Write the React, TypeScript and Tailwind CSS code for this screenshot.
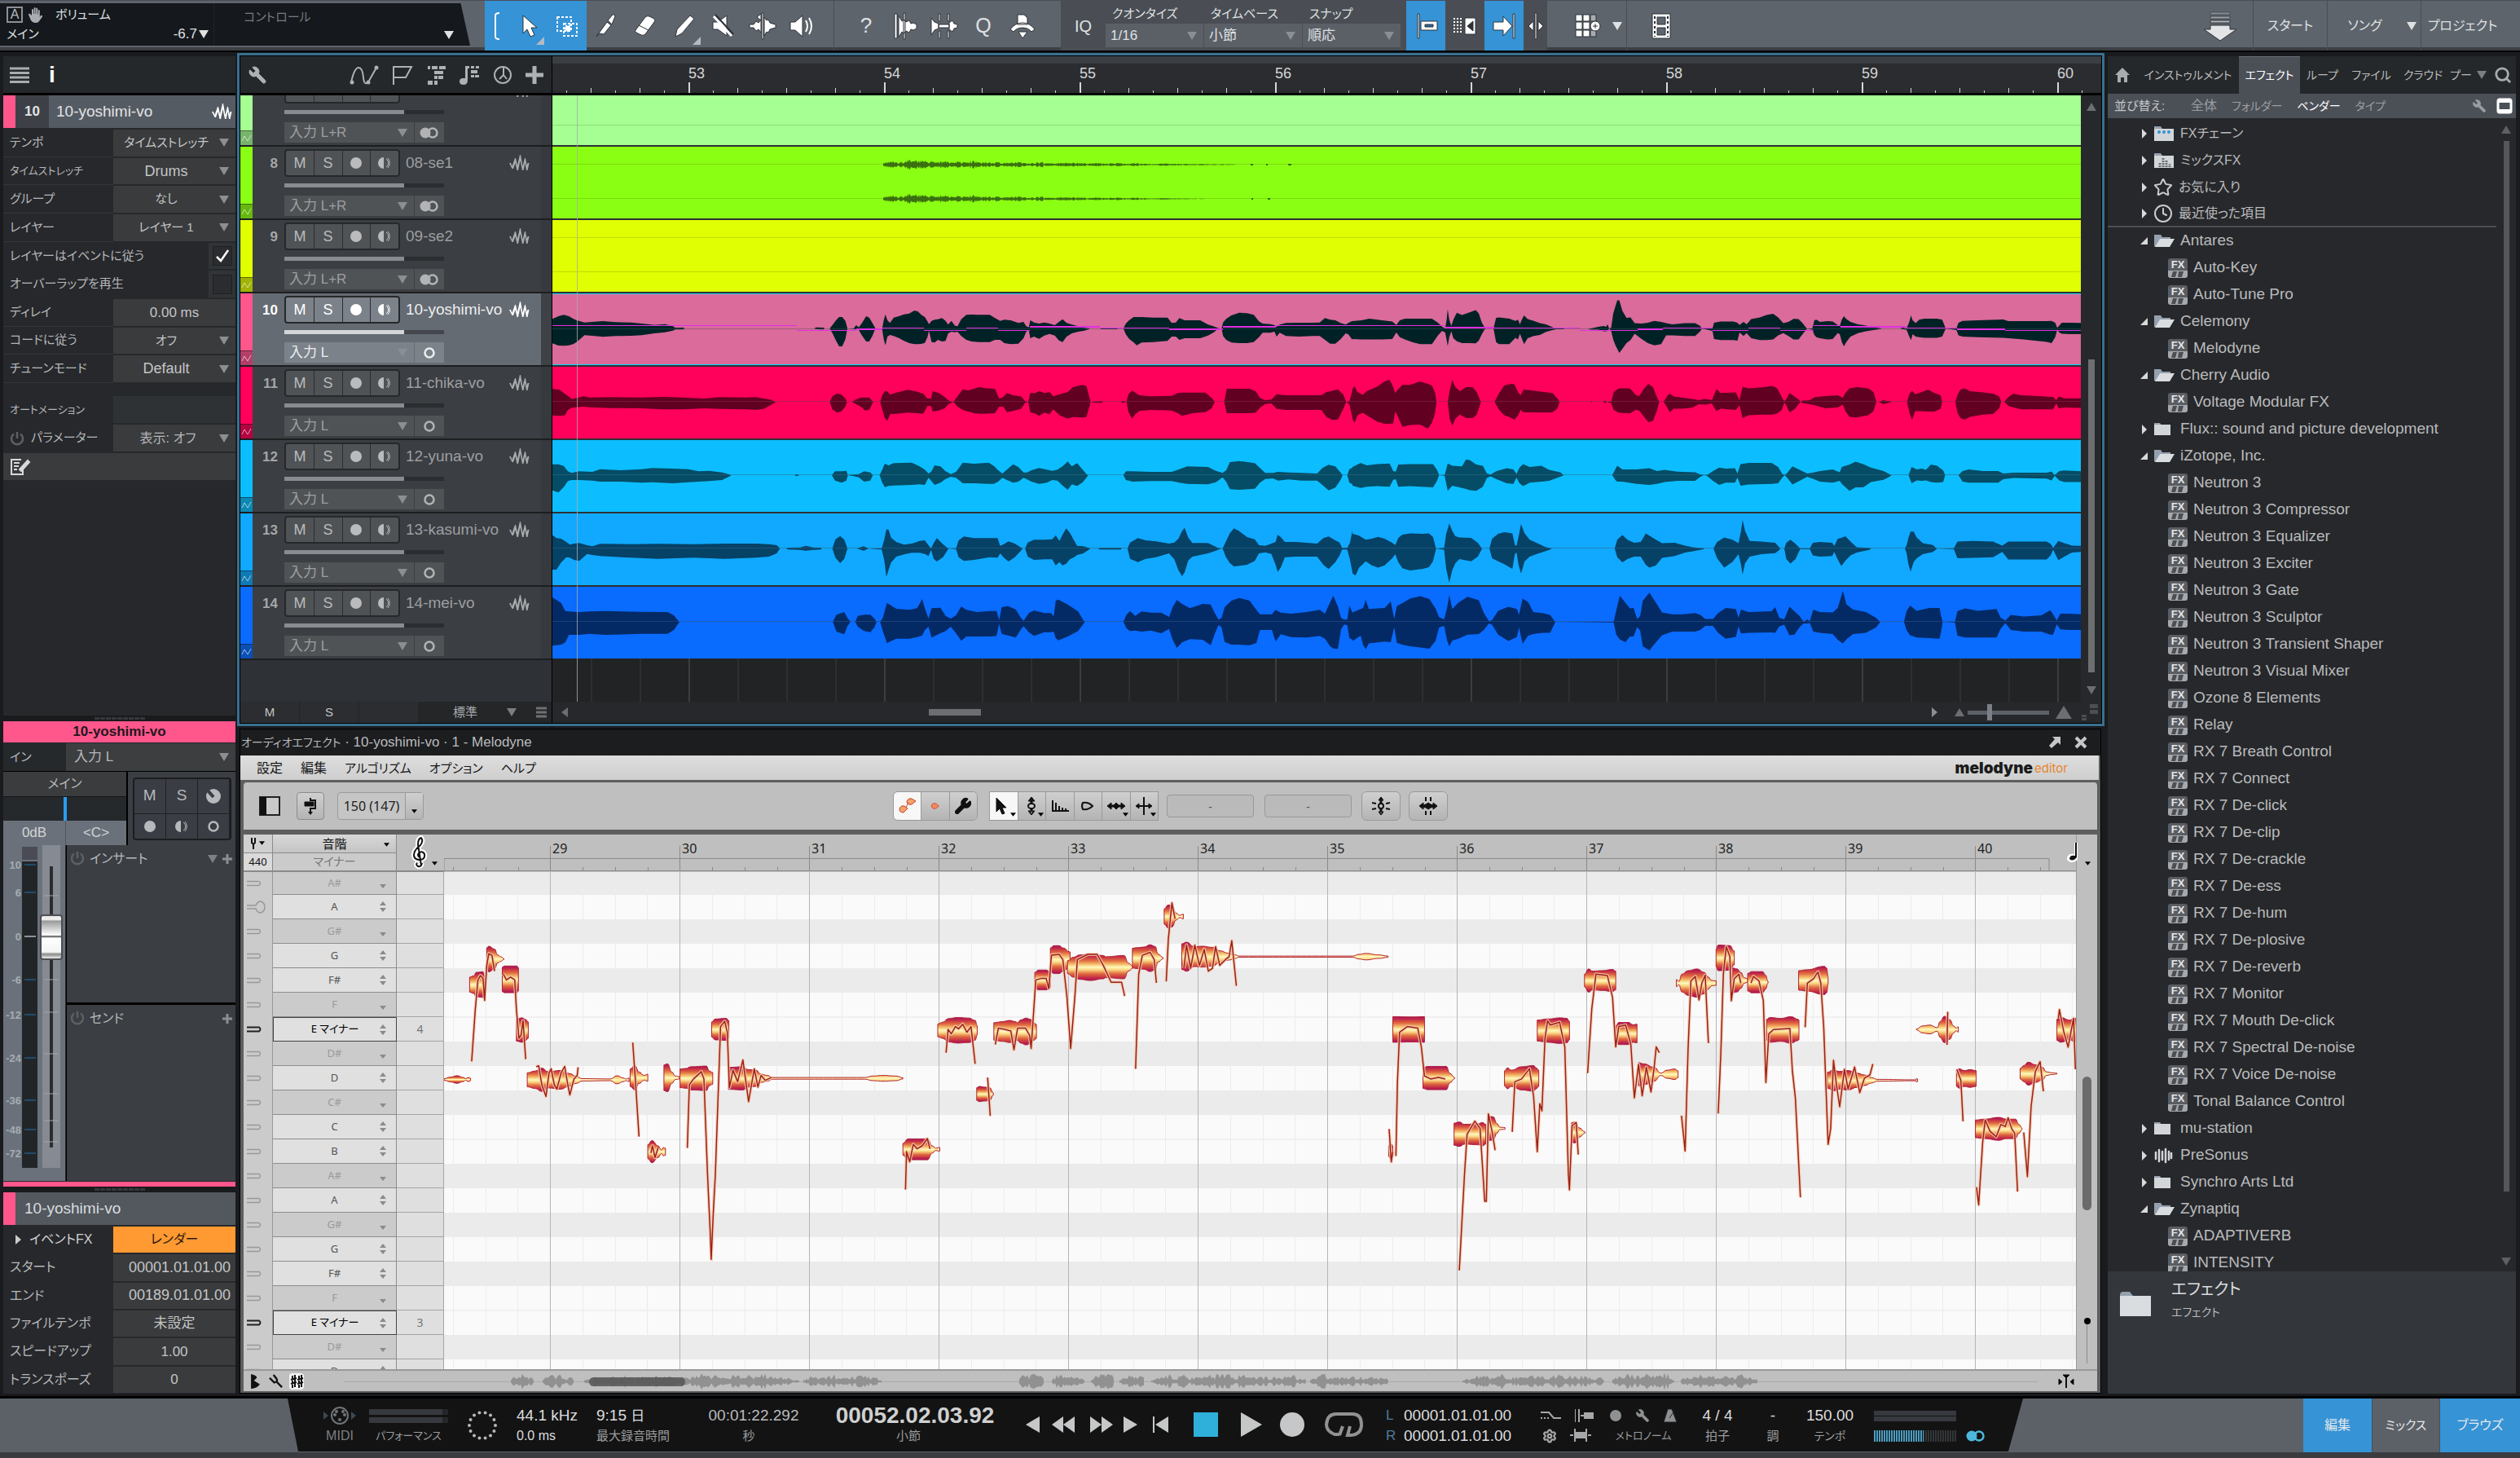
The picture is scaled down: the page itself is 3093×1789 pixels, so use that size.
import React from "react";
import { Search, Wrench, Settings, Star, Clock } from "lucide-react";

/* ------------------------------------------------------------------ */
/* Waveform data: triples of position, upper peak, lower peak           */
/* ------------------------------------------------------------------ */

type Segment = { ox: number; sx: number; sy: number; data: string };

const EARLY = { ox: -18, sx: 1.568, sy: 3 };
const LATE = { ox: 962, sx: 1.6, sy: 2.8 };

const yoshimi: Segment[] = [
  {
    ...EARLY,
    data: "28,35,55 40,45,63 50,50,64 60,45,62 68,36,58 75,30,50 90,22,25 110,25,28 125,27,31 150,23,28 180,22,27 200,18,25 225,13,18 245,16,14 260,8,8 265,2,4 280,3,4 283,0,0 532,0,0 536,4,3 550,3,4 552,0,0 562,0,0 568,14,20 574,30,45 580,42,66 586,42,66 592,28,40 596,0,0 608,0,2 613,12,4 618,4,6 624,20,26 632,45,48 638,40,48 644,20,28 650,0,0 663,0,4 666,30,40 669,52,62 673,30,30 678,20,24 685,40,28 695,45,35 705,52,46 715,55,54 725,66,58 732,62,58 738,50,57 745,42,53 750,26,32 753,16,8 758,28,50 764,32,52 770,34,42 778,38,48 785,28,46 790,14,18 796,28,12 803,10,14 808,8,12 815,34,28 825,50,42 835,51,48 848,50,50 870,50,50 880,38,42 890,28,42 898,32,54 910,30,58 925,20,56 935,24,36 940,8,12 945,4,6 948,30,36 955,22,30 965,18,38 975,22,26 985,18,20 995,12,26 1003,24,44 1010,34,50 1018,20,30 1028,14,18 1040,8,12 1052,2,8 1062,0,2 1063,0,0 1083,0,0 1084,1,3 1115,1,3 1116,0,0 1127,0,0 1132,18,22 1138,30,38 1147,42,52 1153,42,62 1162,42,52 1185,40,50 1212,40,46 1220,20,30 1228,22,30 1235,38,42 1245,30,36 1275,30,36 1290,14,26 1300,8,16 1308,2,4 1312,0,2 1316,0,0 1319,22,28 1325,35,42 1335,48,52 1350,58,54 1365,56,54 1378,50,50 1388,26,32 1395,18,16 1410,16,16 1418,12,12 1422,6,30 1428,14,16 1440,20,28 1465,21,30 1490,21,28 1505,22,28 1515,38,42 1525,32,56 1535,30,56 1545,20,40 1555,14,18 1560,20,22 1568,28,42",
  },
  {
    ...LATE,
    data: "32,25,36 50,28,38 65,34,38 90,28,38 110,24,36 118,12,14 125,28,30 135,34,38 150,34,48 165,34,54 188,34,54 200,20,24 208,6,8 214,0,14 217,30,40 219,66,60 222,30,30 226,8,10 230,30,34 237,54,44 247,46,50 260,54,50 274,63,51 280,52,42 286,20,20 292,2,2 294,0,0 309,0,0 314,36,48 320,38,54 340,34,54 352,26,32 357,30,38 361,14,18 364,28,32 369,45,54 376,32,34 388,26,26 400,18,22 412,14,12 425,4,6 432,0,3 447,0,3 448,0,0 494,0,0 500,0,4 515,6,4 525,8,10 530,6,10 533,14,8 536,0,0 540,2,8 544,50,38 549,80,60 552,97,70 556,97,84 562,60,70 570,36,50 578,38,40 586,18,18 600,17,36 612,20,50 625,26,58 638,22,54 648,18,24 660,14,24 685,18,26 705,18,26 715,8,10 718,0,0 739,0,8 742,20,36 755,24,40 780,24,40 788,20,42 792,12,14 800,22,26 806,14,16 815,32,34 832,38,40 845,46,40 858,50,38 868,38,24 878,18,16 888,22,26 898,33,38 908,32,38 916,18,20 923,2,4 925,0,0 935,0,4 939,28,22 943,30,30 950,22,34 965,25,38 975,24,36 985,12,16 989,8,20 993,30,46 997,42,62 1002,32,46 1010,22,28 1025,14,16 1040,10,10 1055,4,6 1070,0,2 1071,0,0 1108,0,0 1112,3,3 1120,0,4 1125,20,26 1129,45,40 1132,28,20 1138,18,28 1145,30,30 1155,34,32 1180,34,32 1190,30,28 1196,4,4 1198,0,0 1218,0,6 1222,20,24 1230,26,28 1260,28,30 1310,31,32 1320,25,34 1350,25,38 1395,25,46 1405,26,50 1412,20,30 1416,2,4 1420,10,14 1425,20,18 1440,20,20 1480,18,20",
  },
];

const chika: Segment[] = [
  {
    ...EARLY,
    data: "28,48,50 42,44,52 52,30,50 58,22,30 66,10,22 75,14,20 88,20,18 100,16,20 140,17,23 200,16,24 240,18,28 280,16,28 320,12,24 350,17,26 400,16,28 420,17,30 435,12,26 448,8,12 457,0,2 458,0,0 562,0,0 567,20,28 576,30,40 584,28,36 592,12,18 595,0,0 605,0,0 612,8,8 622,16,18 630,16,32 638,16,30 645,0,2 646,0,0 659,0,0 663,24,28 668,40,60 673,38,70 678,26,46 690,34,44 712,44,40 728,38,42 742,30,44 750,12,16 757,12,16 760,40,36 772,32,32 783,18,24 790,6,10 796,0,4 800,0,0 808,20,18 818,46,30 828,42,36 840,48,42 850,55,44 860,50,44 880,48,42 888,12,18 896,18,18 903,32,38 915,24,34 930,20,26 938,2,4 944,0,0 948,32,38 958,32,44 965,40,52 975,32,40 985,36,46 992,20,28 1005,28,50 1020,36,62 1030,54,56 1048,62,58 1056,58,56 1062,14,16 1064,0,0 1072,0,3 1085,2,4 1088,0,0 1122,0,0 1126,3,4 1133,0,0 1137,28,38 1144,42,62 1150,34,46 1158,24,34 1180,20,30 1220,22,32 1232,32,42 1240,34,52 1260,34,42 1285,34,38 1297,14,24 1303,0,0 1321,0,0 1326,48,42 1370,48,42 1382,38,40 1390,14,22 1400,6,8 1412,8,6 1422,28,26 1440,24,30 1480,24,30 1508,24,30 1518,36,56 1528,40,66 1540,46,66 1550,28,28 1556,0,0 1562,0,10 1568,44,60",
  },
  {
    ...LATE,
    data: "32,44,60 36,54,72 42,34,46 52,24,38 60,36,46 80,52,68 95,70,76 105,76,76 112,50,74 116,30,34 120,40,46 130,58,86 145,58,80 165,70,78 180,62,92 188,56,72 194,32,40 197,0,0 219,0,0 223,40,60 228,74,82 234,50,58 243,36,44 255,50,56 268,50,56 276,34,44 284,0,2 285,0,0 311,0,0 320,30,28 330,56,46 342,62,54 350,60,62 357,34,48 362,22,28 368,42,36 390,38,36 408,34,36 425,30,36 434,12,24 439,0,0 500,0,0 501,3,3 503,0,0 524,0,0 528,4,4 531,0,0 540,0,4 545,34,28 555,46,38 577,46,40 588,24,28 595,20,30 604,44,50 613,62,70 622,50,66 630,16,30 634,0,2 635,0,0 643,0,0 650,20,20 655,28,36 663,18,24 680,14,24 700,10,20 712,6,8 725,10,10 738,6,6 741,20,16 747,44,32 755,30,24 785,32,28 792,6,12 798,52,56 810,46,46 840,50,44 857,55,44 866,46,40 875,16,28 880,2,2 884,8,12 890,30,36 900,18,26 908,8,8 912,0,0 916,4,4 930,6,8 940,16,12 960,20,22 985,22,20 995,14,10 1000,30,32 1008,46,52 1022,50,54 1045,46,46 1055,34,32 1061,0,0 1066,0,0 1074,6,8 1092,0,0 1121,0,0 1126,28,40 1131,38,62 1137,26,32 1150,34,32 1162,42,34 1175,30,34 1187,22,24 1190,0,0 1216,0,0 1220,24,38 1226,42,56 1234,46,62 1245,36,52 1270,32,44 1290,28,42 1302,18,22 1306,0,0 1312,0,0 1320,16,14 1330,28,20 1345,22,26 1380,20,26 1408,16,26 1414,6,6 1419,18,22 1430,12,20 1480,12,22",
  },
];

const yuna: Segment[] = [
  {
    ...EARLY,
    data: "28,40,56 40,40,64 50,34,44 58,14,22 65,8,18 80,14,18 105,12,20 120,22,24 160,18,24 200,22,28 220,26,26 260,24,30 290,22,26 310,14,24 330,16,22 355,10,18 370,2,4 372,0,0 494,0,0 498,4,4 504,0,0 566,0,0 572,14,20 585,14,28 594,16,20 597,0,0 608,2,4 618,4,8 628,14,24 640,10,20 645,0,0 658,0,0 663,20,28 668,42,44 675,36,40 685,44,38 720,46,36 735,32,34 745,20,36 752,6,10 757,12,20 764,36,36 775,32,28 785,14,14 795,4,6 805,12,10 818,46,30 840,42,30 868,46,32 878,34,32 886,18,24 894,6,10 903,20,18 915,40,28 925,30,24 935,10,10 942,10,16 950,18,24 965,26,32 980,20,28 990,16,18 1000,20,20 1010,32,38 1020,50,54 1028,32,34 1038,44,40 1048,22,28 1056,4,10 1059,0,0 1127,0,0 1132,14,18 1145,14,24 1180,12,22 1220,12,22 1235,22,28 1250,32,32 1290,30,34 1305,16,26 1318,8,8 1325,18,24 1332,48,52 1350,52,54 1380,44,50 1390,26,28 1400,8,14 1415,8,12 1425,12,20 1445,10,16 1470,8,20 1500,6,20 1510,26,36 1522,38,56 1535,32,46 1545,10,18 1549,0,0 1558,0,0 1562,22,28 1568,28,34",
  },
  {
    ...LATE,
    data: "32,28,36 48,42,44 60,34,40 80,38,38 105,40,40 112,14,16 117,12,14 122,36,40 145,38,38 190,38,42 198,18,20 202,0,0 213,0,2 219,40,54 228,32,36 247,30,44 255,54,48 262,52,52 275,36,54 288,32,40 296,6,10 303,2,4 315,14,14 335,24,28 348,20,30 354,4,8 360,26,28 367,38,38 380,28,26 403,32,22 418,18,20 440,10,6 447,0,0 542,0,0 548,20,16 552,32,22 562,20,22 590,20,30 615,24,34 630,14,30 645,18,24 670,12,20 705,10,20 715,2,6 722,0,0 728,0,2 740,14,20 752,26,34 765,22,26 783,24,26 788,6,8 794,38,36 810,42,32 855,42,30 868,28,28 876,4,8 881,0,0 886,8,10 896,30,32 910,18,20 925,6,6 935,8,12 950,14,22 975,20,26 989,10,20 993,28,30 1008,36,54 1020,46,42 1035,38,42 1050,26,24 1075,14,16 1088,2,4 1090,0,0 1124,0,0 1130,28,28 1140,20,18 1150,22,20 1158,18,18 1168,36,24 1180,32,26 1192,16,24 1196,0,0 1222,0,0 1230,14,22 1242,20,26 1270,14,26 1300,14,26 1310,6,14 1330,8,10 1395,8,12 1405,12,18 1411,0,2 1420,14,18 1430,16,24 1480,12,24",
  },
];

const kasumi: Segment[] = [
  {
    ...EARLY,
    data: "28,50,78 36,38,78 45,36,52 55,24,32 62,14,34 70,18,42 80,20,46 95,12,20 105,8,24 120,17,28 180,16,34 230,17,38 300,16,34 360,18,38 420,18,34 445,16,30 460,12,18 466,0,0 478,0,0 482,3,4 505,4,5 516,10,8 530,4,5 545,3,4 546,0,0 567,0,0 573,34,34 582,46,54 590,32,38 596,0,0 614,0,0 627,8,8 637,0,0 662,0,4 667,34,44 671,70,104 675,70,80 680,40,52 690,24,30 705,14,22 720,18,16 735,28,16 745,30,20 752,12,28 757,0,6 762,20,38 768,38,48 780,16,32 790,0,2 791,0,0 805,0,2 810,30,32 820,44,46 840,38,42 870,38,32 885,38,34 890,10,18 897,16,34 906,26,48 918,18,32 930,4,8 933,0,0 938,0,0 943,22,30 955,32,42 975,32,40 990,34,40 997,48,62 1004,28,50 1010,50,62 1017,74,56 1024,58,40 1032,30,32 1038,10,24 1050,8,18 1061,2,4 1063,0,0 1078,0,0 1082,2,4 1122,2,4 1124,0,0 1135,0,0 1140,22,38 1155,38,50 1170,30,38 1190,26,32 1215,18,18 1225,22,40 1233,36,80 1240,64,102 1245,76,88 1252,40,44 1260,20,30 1290,20,18 1305,6,8 1312,0,2 1318,0,0 1324,24,30 1332,56,54 1340,74,66 1350,64,64 1365,42,60 1380,34,46 1388,12,18 1400,10,14 1412,18,20 1420,24,60 1424,50,86 1430,42,70 1438,24,32 1460,24,30 1500,18,30 1512,38,60 1522,44,76 1535,30,50 1543,22,26 1548,2,4 1558,2,4 1563,20,40 1568,66,88",
  },
  {
    ...LATE,
    data: "32,50,86 38,48,92 45,44,66 58,30,44 70,34,58 82,40,66 95,34,58 110,20,34 116,12,20 122,36,48 130,48,68 145,52,76 170,50,70 182,52,64 190,40,44 196,0,2 197,0,0 203,0,2 212,2,4 216,50,70 222,86,118 228,60,74 234,42,50 242,38,36 265,36,44 278,20,28 286,0,2 287,0,0 301,0,0 306,34,34 318,50,44 330,56,54 346,52,70 351,12,18 354,8,14 358,40,56 363,84,86 370,52,44 380,30,28 395,18,18 410,6,10 422,0,2 423,0,0 547,0,0 552,30,30 562,46,48 572,30,36 585,20,28 598,22,28 608,52,56 615,44,66 628,30,58 640,18,32 665,20,26 685,10,14 700,4,10 722,0,2 723,0,0 741,0,0 748,22,34 762,38,66 778,30,46 790,18,20 795,60,56 798,98,90 803,60,50 812,26,28 835,24,20 862,20,16 870,4,6 872,0,0 880,0,0 884,20,36 892,30,52 902,16,36 911,0,2 930,0,2 936,20,24 950,22,28 974,20,26 978,8,12 985,34,38 992,36,60 1000,42,42 1010,24,24 1022,4,14 1048,2,4 1050,0,0 1117,0,0 1120,10,14 1124,38,56 1128,58,80 1134,58,46 1140,38,34 1152,18,20 1172,12,12 1179,0,2 1180,0,0 1213,0,2 1220,24,34 1250,26,32 1290,24,30 1308,10,12 1320,24,38 1350,24,38 1395,24,38 1403,16,24 1408,2,4 1418,26,40 1430,18,28 1445,10,14 1480,8,10",
  },
];

const mei: Segment[] = [
  {
    ...EARLY,
    data: "28,90,88 45,70,84 53,40,76 60,38,48 80,36,48 100,38,44 130,40,48 200,37,44 250,36,44 262,24,30 272,0,2 273,0,0 568,0,0 575,26,36 590,36,46 596,14,16 602,0,0 611,0,0 616,22,18 628,26,34 640,26,38 648,12,20 652,0,0 659,0,0 664,14,34 672,70,78 690,48,62 715,44,62 730,50,56 740,84,50 745,50,30 752,12,18 758,50,58 775,52,42 785,22,34 795,12,18 805,24,42 815,56,70 825,44,54 845,36,54 870,40,54 883,40,52 888,6,8 893,54,44 905,58,50 920,46,58 930,14,28 935,4,16 945,32,38 955,42,52 975,32,38 988,32,38 993,20,36 997,78,60 1002,82,68 1020,64,54 1040,38,34 1050,6,8 1053,0,0 1127,0,0 1133,26,24 1140,40,34 1150,22,32 1162,38,36 1180,34,32 1200,34,42 1215,18,26 1222,54,66 1230,80,96 1240,66,76 1255,50,64 1280,66,66 1295,64,86 1303,32,44 1310,8,12 1316,14,20 1322,54,74 1335,78,84 1350,88,84 1370,78,86 1383,44,78 1390,28,30 1413,28,30 1420,44,72 1430,34,46 1450,30,56 1480,36,58 1505,44,52 1515,30,62 1525,72,90 1531,96,98 1540,56,100 1546,14,28 1552,8,10 1558,8,12 1562,60,60 1568,34,66",
  },
  {
    ...LATE,
    data: "32,32,66 48,44,48 53,48,80 58,76,94 64,44,74 95,48,68 107,70,70 114,10,18 119,54,72 130,64,78 145,80,84 165,88,88 183,78,92 195,46,66 202,16,20 212,8,14 218,50,66 222,92,84 228,44,64 240,66,58 258,86,44 280,74,42 290,30,28 300,2,6 306,6,10 318,38,44 338,52,66 355,44,52 359,24,20 366,80,76 377,68,48 387,34,42 405,30,38 420,24,38 430,0,2 431,0,0 545,0,2 550,40,44 557,90,60 568,66,70 577,46,50 584,48,50 591,10,18 597,20,30 602,72,84 615,100,98 628,66,70 640,32,46 660,26,34 680,26,34 705,30,34 715,24,28 725,10,14 740,10,14 750,30,38 765,48,58 785,44,52 790,14,16 795,42,40 810,34,38 855,36,36 862,50,38 870,14,16 880,8,10 890,52,46 900,36,44 910,20,18 918,0,6 925,8,6 930,2,4 937,42,34 950,34,38 975,32,42 985,48,62 995,106,74 1002,60,60 1015,42,42 1040,34,38 1060,14,20 1068,0,2 1069,0,0 1115,0,0 1120,36,28 1127,56,46 1140,38,54 1165,48,56 1185,48,58 1188,20,34 1191,0,0 1215,0,2 1220,36,48 1235,46,54 1260,38,54 1297,44,54 1305,14,24 1314,4,4 1325,24,28 1350,18,34 1385,22,34 1402,40,44 1408,26,44 1415,4,8 1422,28,26 1440,28,28 1480,24,28",
  },
];

function wavePath(seg: Segment, cy: number) {
  const pts = seg.data.split(" ").map((p) => p.split(",").map(Number));
  const x = (v: number) => (v / seg.sx + seg.ox).toFixed(1);
  const top = pts.map(([px, u]) => `${x(px)},${(cy - u / seg.sy).toFixed(1)}`);
  const bot = pts.map(([px, , d]) => `${x(px)},${(cy + d / seg.sy).toFixed(1)}`).reverse();
  return `M${top.join("L")}L${bot.join("L")}Z`;
}

function noise(n: number) {
  const v = Math.sin(n * 127.1 + 11.7) * 43758.5453;
  return v - Math.floor(v);
}

function noisePath(from: number, to: number, cy: number, amp: (t: number) => number, step: number) {
  const top: string[] = [];
  const bot: string[] = [];
  for (let x = from; x <= to; x += step) {
    const swell = 0.45 + 0.55 * noise(Math.floor(x / 9));
    const a = amp((x - from) / (to - from)) * swell * (0.25 + 0.75 * noise(x));
    top.push(`${x},${(cy - a).toFixed(1)}`);
    bot.unshift(`${x},${(cy + a).toFixed(1)}`);
  }
  return `M${top.join("L")}L${bot.join("L")}Z`;
}

/* pitch trace of the selected track: start, end, offset from the lane top, thickness */
const pitchTrace: number[][] = [
  [0, 300, 39, 1], [300, 373, 45, 1], [373, 405, 43, 2], [405, 456, 42, 1], [456, 508, 45, 1], [508, 547, 42, 1],
  [547, 586, 45, 1], [586, 672, 40, 2], [672, 757, 42, 1], [757, 823, 43, 2], [823, 888, 40, 2], [888, 1095, 39, 1],
  [1095, 1156, 41, 2], [1156, 1261, 42, 1], [1261, 1332, 45, 1], [1332, 1363, 43, 2], [1363, 1424, 42, 1],
  [1424, 1468, 45, 1], [1468, 1507, 42, 1], [1507, 1548, 45, 1], [1548, 1581, 39, 1], [1581, 1662, 40, 2],
  [1662, 1724, 42, 1], [1724, 1783, 43, 2], [1783, 2300, 45, 1],
];

/* ------------------------------------------------------------------ */
/* Note blobs and pitch curves of the pitch editor                      */
/* ------------------------------------------------------------------ */

type Zone = { ox: number; sx: number; sy: number; blobs: [number, string][]; curves: string[] };

const zones: Zone[] = [
  {
    ox: -255,
    sx: 1.568,
    sy: 2.8,
    blobs: [
      [1242, "400,3 412,8 425,13 437,7 441,3 447,7 451,4"],
      [916, "449,26 457,30 462,42 475,44 478,24"],
      [828, "482,38 486,44 497,34 503,14 509,8 515,2"],
      [898, "512,42 516,46 540,46 543,40"],
      [1072, "539,38 550,42 557,36 562,28"],
      [1243, "560,24 575,30 588,40 600,28 625,32 640,22 655,12 665,4 720,3 733,14 745,6 750,3 756,6"],
      [1236, "758,30 767,42 775,20 785,8 792,12"],
      [1236, "823,44 830,48 838,20 845,6 853,4"],
      [1238, "854,32 865,34 875,40 905,42 910,26 917,20"],
      [1490, "792,24 800,38 812,20 818,6 822,14 826,12"],
      [1070, "915,26 922,36 943,38 948,30"],
      [1238, "947,38 975,40 985,30 1000,28 1010,14 1022,10 1032,3 1210,3 1225,8 1245,10 1270,8 1283,2"],
      [1482, "1283,20 1293,36 1330,36 1340,12 1346,4 1354,6"],
      [1073, "1350,22 1360,28 1370,40 1388,44 1410,42 1422,34 1426,16"],
      [1292, "1425,22 1430,26 1440,24 1450,22 1457,4"],
      [1077, "1458,30 1475,34 1488,38 1500,34 1503,30 1510,40 1520,46 1528,42 1535,30 1540,24"],
    ],
    curves: [
      "453,1180 460,1000 465,900 470,885 475,895 478,970 482,850 486,810 492,815 497,870",
      "514,880 520,900 528,890 536,900 539,1000 544,1100 548,1090 552,1040 557,1172",
      "577,1198 582,1195 588,1260 596,1300 602,1220 606,1205 612,1260 617,1275 625,1220 632,1197 638,1260 642,1295 650,1240 656,1228 658,1200",
      "763,1115 768,1240 775,1438",
      "868,1477 872,1260 880,1240 895,1215 900,1240 907,1568 912,1760 914,1860 918,1700 922,1568 932,1060 940,1042 945,1080 949,1270 956,1210 965,1250 975,1175 980,1240 986,1318 997,1205 1004,1268 1010,1228 1018,1245 1030,1235",
      "798,1495 801,1470 806,1510 812,1475",
      "1288,1620 1290,1490 1296,1525 1303,1465 1310,1480 1320,1470 1330,1445 1335,1480",
      "1366,1150 1370,1070 1376,1085 1384,1060 1390,1068 1398,1052 1406,1080 1414,1060 1422,1188",
      "1446,1235 1451,1367",
    ],
  },
  {
    ox: 535,
    sx: 1.568,
    sy: 2.8,
    blobs: [
      [900, "298,26 305,34 320,34 328,26"],
      [830, "328,40 335,48 345,48 352,40 366,26"],
      [856, "361,22 372,34 385,42 405,46 430,40 435,36 470,40 478,14 488,2"],
      [825, "486,34 495,36 508,38 520,46 530,40 535,14 545,2"],
      [682, "547,26 555,40 562,36 570,12 577,4 584,8"],
      [820, "581,44 590,50 605,34 620,36 640,32 655,20 670,12 685,6 690,2 910,2 922,8 935,11 960,6 978,2"],
      [1070, "987,44 1025,43 1048,44"],
      [1237, "1045,36 1055,40 1090,40 1097,16 1106,2"],
      [1488, "979,18 983,26 987,18"],
      [1430, "1105,38 1115,42 1125,34 1150,36 1160,40 1166,34"],
      [1410, "1171,42 1180,40 1188,16 1193,4 1203,3"],
      [1238, "1202,26 1208,36 1215,28 1235,40 1258,44 1263,36 1268,28"],
      [1074, "1265,36 1285,40 1310,44 1322,42 1327,32"],
      [1424, "1331,34 1338,36 1346,16 1357,2"],
      [902, "1356,22 1364,40 1372,32 1390,34 1410,38 1416,32"],
      [1084, "1417,28 1422,38 1440,38 1450,30 1457,32"],
      [1224, "1460,40 1470,36 1490,24 1503,4 1515,14 1530,18 1536,12"],
    ],
    curves: [
      "222,1122 228,1065 240,1070 252,1075 258,1140 265,1065 280,1065 288,1090 291,1135 300,900 310,895 320,895 325,930 330,815 345,812 352,830 360,960 367,1135 375,960 380,830 400,812 418,812 430,850 445,908 465,908 471,955",
      "492,1205 498,880 505,815 520,805 528,830 532,910",
      "551,905 555,760 562,635 568,690",
      "585,860 590,780 598,860 606,780 615,850 624,795 632,870 640,860 646,785 654,850 665,830 672,820 677,765 686,920",
      "980,1412 984,1525 987,1490",
      "993,1505 996,1250 1000,1080 1015,1060 1035,1065 1042,1130 1048,1230 1060,1240 1075,1235 1088,1240",
      "1115,1898 1118,1800 1125,1568 1130,1430 1145,1385 1155,1410 1164,1660 1167,1660 1171,1360 1178,1420 1184,1485",
      "1217,1422 1222,1250 1235,1240 1250,1205 1258,1300 1265,1490 1270,1325 1274,1350 1280,1100 1285,1040 1290,1055 1308,1045 1318,1130 1325,1568 1327,1621 1332,1400 1340,1390 1344,1500",
      "1362,1220 1370,1000 1378,880 1400,885 1410,960 1416,1130 1422,1060 1435,1055 1445,1120 1452,1305 1460,1190 1467,1298 1475,1200 1484,1285 1490,1200 1494,1130 1500,1150",
    ],
  },
  {
    ox: 1355,
    sx: 2.24,
    sy: 1.8447,
    blobs: [
      [600, "353,8 360,4 368,20 385,28 410,32 430,24 440,14 450,6 462,5"],
      [543, "462,20 468,29 500,28 512,16"],
      [594, "508,28 520,26 530,18 540,6 549,4"],
      [598, "549,20 560,24 590,24 598,16 605,2"],
      [706, "601,24 610,28 640,26 668,30 688,24 690,22"],
      [594, "689,22 710,24 760,32 766,28 770,8"],
      [820, "768,18 785,24 800,20 825,22 850,16 870,12 890,6 905,2 1012,1 1013,4 1016,3"],
      [705, "1013,1 1030,8 1050,10 1070,4 1078,18 1090,30 1105,22 1115,8 1122,3 1128,6"],
      [816, "1123,18 1130,22 1145,18 1160,20 1177,18"],
      [930, "1175,20 1200,22 1240,26 1260,22 1285,22 1295,10 1303,2"],
      [805, "1298,12 1308,18 1320,26 1340,20 1360,14 1370,4 1385,2 1399,1"],
      [706, "1399,24 1410,28 1435,22 1445,26 1500,24"],
    ],
    curves: [
      "367,900 377,980 385,750 393,595 405,585 415,638 423,600 432,582 441,736",
      "468,895 475,760 482,580 490,518 500,540 504,640 512,590 525,580 530,600",
      "558,600 565,585 580,595 592,640 599,825 607,715 620,705 665,703 672,800 680,860 694,1085",
      "707,700 713,600 730,590 742,575 750,600 758,700 770,965 777,930 785,775 793,830 802,880 815,795 825,840 843,790 857,848 870,815 885,808 893,783",
      "1099,665 1097,740",
      "1124,795 1135,820 1141,913",
      "1178,1062 1184,1102 1195,960 1202,910 1215,935 1232,948 1245,920 1257,925 1265,905 1275,930 1283,940 1291,1072",
      "1308,938 1318,1038 1328,880 1340,800 1353,778 1362,845",
      "1403,680 1406,660 1418,710 1430,745 1440,700 1445,680 1450,795",
    ],
  },
];

function blobPath(z: Zone, cy: number, data: string) {
  const pts = data.split(" ").map((p) => p.split(",").map(Number));
  const x = (v: number) => v / z.sx + z.ox;
  const y = (v: number) => v / z.sy - 189;
  const side = (sign: number, list: number[][]) => {
    let d = "";
    list.forEach(([px, h], i) => {
      const X = x(px).toFixed(1);
      const Y = y(cy + sign * h).toFixed(1);
      if (i === 0) d += `${X},${Y}`;
      else {
        const [qx, qh] = list[i - 1];
        const mx = ((x(px) + x(qx)) / 2).toFixed(1);
        d += `C${mx},${y(cy + sign * qh).toFixed(1)} ${mx},${Y} ${X},${Y}`;
      }
    });
    return d;
  };
  return `M${side(-1, pts)}L${side(1, [...pts].reverse())}Z`;
}

function curvePoints(z: Zone, data: string) {
  return data
    .split(" ")
    .map((p) => p.split(",").map(Number))
    .map(([a, b]) => `${(a / z.sx + z.ox).toFixed(1)},${(b / z.sy - 189).toFixed(1)}`)
    .join(" ");
}

/* ------------------------------------------------------------------ */
/* Small shared pieces                                                  */
/* ------------------------------------------------------------------ */

function Tri({ dir = "down", className = "" }: { dir?: "down" | "up" | "left" | "right"; className?: string }) {
  const pts = { down: "0,1 12,1 6,11", up: "0,11 12,11 6,1", left: "11,0 11,12 3,6", right: "3,0 3,12 10,6" }[dir];
  return (
    <svg viewBox="0 0 12 12" className={`size-3 shrink-0 fill-current ${className}`} aria-hidden>
      <polygon points={pts} />
    </svg>
  );
}

function Pick({ label, value, className = "", selectClass = "" }: { label: string; value: string; className?: string; selectClass?: string }) {
  return (
    <div className={`relative flex items-center ${className}`}>
      <select aria-label={label} defaultValue={value} className={`h-full w-full appearance-none bg-transparent outline-none ${selectClass}`}>
        <option>{value}</option>
      </select>
      <Tri className="pointer-events-none absolute right-2 text-[#8b8e92]" />
    </div>
  );
}

const WaveGlyph = ({ className = "" }: { className?: string }) => (
  <svg viewBox="0 0 26 22" className={`h-[22px] w-[26px] shrink-0 fill-current ${className}`} aria-hidden>
    <path d="M1 11h2l1.500 4L7 8l1-3h1l2 9 3-13h1l2.500 14L20 5h1l1.500 9 1-3h2l-2 9h-1.500L20.500 11 18.500 20h-1.500L14.500 8 12 20h-1.500L8.500 11 6 18H4.500z" />
  </svg>
);

const Half = ({ className = "" }: { className?: string }) => (
  <svg viewBox="0 0 16 16" className={`size-4 ${className}`} aria-hidden>
    <path d="M7 1a7 7 0 0 0 0 14z" fill="currentColor" />
    <path d="M10 3a6 6 0 0 1 0 10M12 2a9 9 0 0 1 0 12" fill="none" stroke="currentColor" strokeWidth="1" />
  </svg>
);

const Dot = () => (
  <svg viewBox="0 0 16 16" className="size-4" aria-hidden>
    <circle cx="8" cy="8" r="7" fill="currentColor" />
  </svg>
);

const Stereo = () => (
  <svg viewBox="0 0 24 14" className="h-[14px] w-6" aria-hidden>
    <circle cx="7" cy="7" r="6.5" fill="currentColor" />
    <circle cx="16" cy="7" r="5.5" fill="none" stroke="currentColor" strokeWidth="2.5" />
  </svg>
);

const Mono = () => (
  <svg viewBox="0 0 14 14" className="size-[14px]" aria-hidden>
    <circle cx="7" cy="7" r="5.5" fill="none" stroke="currentColor" strokeWidth="2.5" />
  </svg>
);

const Power = () => (
  <svg viewBox="0 0 18 18" className="size-[18px] text-[#5d6064]" fill="none" stroke="currentColor" strokeWidth="2.5" aria-hidden>
    <path d="M5 3.5a7 7 0 1 0 8 0M9 1v8" />
  </svg>
);

function Glyph({ children, w = 34, h = 36 }: { children: React.ReactNode; w?: number; h?: number }) {
  return (
    <svg width={w} height={h} viewBox={`0 0 ${w} ${h}`} fill="#fff" stroke="#2c3036" strokeWidth="1" strokeLinejoin="round" aria-hidden className="shrink-0">
      {children}
    </svg>
  );
}

function Grip() {
  return (
    <div className="flex h-[7px] items-center justify-center gap-px bg-[#191a1c]">
      {Array.from({ length: 9 }, (_, i) => (
        <span key={i} className="h-[3px] w-[6px] bg-[#36383b]" />
      ))}
    </div>
  );
}

/* ------------------------------------------------------------------ */
/* Top bar                                                              */
/* ------------------------------------------------------------------ */

function ToolButton({ label, active, corner, className = "w-12", children }: { label: string; active?: boolean; corner?: boolean; className?: string; children: React.ReactNode }) {
  return (
    <button aria-label={label} className={`relative flex h-full shrink-0 items-center justify-center ${active ? "bg-[#3593d6]" : ""} ${className}`}>
      {children}
      {corner && (
        <svg viewBox="0 0 10 10" className="absolute right-1 bottom-[7px] size-[10px] fill-[#b4bac0]" aria-hidden>
          <polygon points="10,0 10,10 0,10" />
        </svg>
      )}
    </button>
  );
}

function TopBar() {
  return (
    <header className="flex h-16 shrink-0 border-t border-[#4b4d57] border-b-2 border-b-black bg-[linear-gradient(#5e646c_0,#5e646c_57px,#3d3f42_57px)] text-[15px] text-[#dfe1e3]">
      <div className="mt-[3px] flex h-[52px] w-[577px] bg-[#15181c] [clip-path:polygon(0_0,98%_0,100%_100%,0_100%)]">
        <div className="flex w-[263px] flex-col justify-center gap-1 border-r border-[#202328] pl-2">
          <div className="flex items-center gap-[6px]">
            <span className="flex size-5 items-center justify-center border-2 border-[#8d9196] text-[16px] leading-none text-[#b7babd]">A</span>
            <svg viewBox="0 0 20 20" className="size-5 fill-[#a9acb0]" aria-hidden>
              <path d="M5 11V4q1-2 2 0v5h.6V2q1-2 2 0v7h.6V2.500q1-2 2 0V9.500h.6V5q1-2 2 0v8q1-3 3-2 1 .5-.5 2.500L14 18q-1 2-4 2-4 0-6-3L1 10q0-2 2-1z" />
            </svg>
            <span className="pl-2 leading-5">ボリューム</span>
          </div>
          <div className="flex items-center leading-5">
            <span className="flex-1">メイン</span>
            <span className="text-[17px]">-6.7</span>
            <Tri className="mr-[6px] ml-[2px]" />
          </div>
        </div>
        <div className="flex flex-1 items-start pt-[7px] pl-9 leading-5 text-[#777a7e]">
          <span className="flex-1">コントロール</span>
          <Tri className="mt-[26px] mr-5 text-[#dfe1e3]" />
        </div>
      </div>
      <div className="ml-[18px] flex">
        <ToolButton label="グループ" active className="w-[30px]">
          <svg width="10" height="36" viewBox="0 0 10 36" fill="none" stroke="#fff" strokeWidth="2" aria-hidden>
            <path d="M8 2q-5 0-5 3v26q0 3 5 3" />
          </svg>
        </ToolButton>
        <ToolButton label="矢印ツール" active corner className="w-[47px]">
          <Glyph><path d="M10 5v22l5-5 4 9 5-2-4-9h7z" /></Glyph>
        </ToolButton>
        <ToolButton label="範囲ツール" active>
          <Glyph>
            <g fill="none" stroke="#fff" strokeWidth="2"><path d="M5 7h17v17H5z" strokeDasharray="3 2" /><path d="M13 15h16v15H13z" strokeDasharray="3 2" /></g>
            <path d="M15 16l3 2 3-2v4l2 2-3 1-2 3-2-3-3-1 2-3z" stroke="none" />
          </Glyph>
        </ToolButton>
        <ToolButton label="分割ツール"><Glyph><path d="M5 31L18 13l5 4-9 11-6-1zM19 11l6-7q3-1 3 2l-4 10z" /></Glyph></ToolButton>
        <ToolButton label="消しゴム"><Glyph><path d="M5 23L17 7q2-2 5-1l6 3q2 2 0 4L17 28q-2 2-5 1l-6-3q-2-1-1-3z" /><path d="M9 17l12 6" fill="none" /></Glyph></ToolButton>
        <ToolButton label="ペイント" corner><Glyph><path d="M6 31l2-9L24 5l5 4-15 18z" /></Glyph></ToolButton>
        <ToolButton label="ミュート"><Glyph><path d="M4 13h6L21 5v25L10 22H4z" /><path d="M5 6l22 24" stroke="#fff" strokeWidth="3" /><path d="M7 4l22 24" fill="none" strokeWidth="2" /></Glyph></ToolButton>
        <ToolButton label="ベンド"><Glyph><path d="M1 16h5l3-4 3 2 3-4v16l-3-4-3 2-3-4H1zM19 7l3 4 2-1 2 4 3 1 4 1v4l-4 1-3 1-2 4-2-1-3 5z" /><path d="M16 2h2v32h-2zM15 3l-5 4 5 4z" /></Glyph></ToolButton>
        <ToolButton label="試聴"><Glyph><path d="M3 13h6l9-8v26l-9-8H3z" /><path d="M22 11q4 7 0 14M26 8q6 10 0 20" fill="none" stroke="#fff" strokeWidth="2" /></Glyph></ToolButton>
      </div>
      <div className="ml-[15px] flex border-l border-[#4a4e55] pl-[15px] text-[26px]">
        <ToolButton label="ヘルプ"><span>?</span></ToolButton>
        <ToolButton label="左へトリム"><Glyph><path d="M4 3h3v30H4zM9 5l4 7 3-2 2 3 4-2 2 4 3-1 4 2v5l-4 2-3-1-2 4-4-2-2 3-3-2-4 7zM15 2h2v32h-2z" /></Glyph></ToolButton>
        <ToolButton label="選択範囲"><Glyph><path d="M1 8l4 5 5 2v6l-5 2-4 6zM10 3h2v9h-2zM10 24h2v9h-2zM21 3h2v9h-2zM21 24h2v9h-2zM10 16h13v4H10zM23 14l4-3 2 4 4 1v4l-4 1-2 4-4-3z" /></Glyph></ToolButton>
        <ToolButton label="クオンタイズ"><span className="text-[25px]">Q</span></ToolButton>
        <ToolButton label="マクロ"><Glyph><path d="M11 4h8l4 4v8H11zM2 22q6-8 15-8t15 8l-4 3q-4-5-11-5T6 25zM12 25h11l-6 8z" /></Glyph></ToolButton>
      </div>
      <div className="ml-[23px] flex bg-[#4a4e54]">
        <ToolButton label="入力クオンタイズ" className="w-[55px]"><span className="text-[20px]">IQ</span></ToolButton>
        {[["クオンタイズ", "1/16"], ["タイムベース", "小節"], ["スナップ", "順応"]].map(([l, v]) => (
          <div key={l} className="w-[121px]">
            <div className="h-7 pt-1 pl-2 leading-6">{l}</div>
            <Pick label={l} value={v} className="mr-px h-[29px] bg-[#5b6067]" selectClass="pl-[6px] text-[17px]" />
          </div>
        ))}
        <ToolButton label="グリッドにスナップ" active className="ml-[6px] w-12"><Glyph><path d="M7 3h2v30H7zM11 12h20v11H11z" /><path d="M16 16h10v3H16z" fill="#2c6c9c" /></Glyph></ToolButton>
        <ToolButton label="カーソル"><Glyph><path d="M17 8h13v20H17z" /><path d="M27 12l-7 6 7 6z" fill="#2c3036" /><path d="M4 8v20M8 8v20M12 8v20" stroke="#fff" strokeWidth="2" strokeDasharray="2 2" /></Glyph></ToolButton>
        <ToolButton label="自動スクロール" active><Glyph><path d="M4 13h12V6l11 12-11 12v-7H4zM28 3h2v30h-2z" /></Glyph></ToolButton>
        <ToolButton label="中央" className="w-[29px]"><Glyph w={24}><path d="M11 2h2v32h-2zM9 12v12l-6-6zM15 12v12l6-6z" /></Glyph></ToolButton>
      </div>
      <div className="flex">
        <ToolButton label="グリッド" className="w-[74px] pl-6"><Glyph><path d="M3 4h8v8H3zM12 4h8v8h-8zM3 13h8v9H3zM12 13h8v9h-8zM3 23h8v8H3zM12 23h8v8h-8z" /><path d="M21 4h7v8h-7zM21 23h7v8h-7z" fill="#a7abb0" /><circle cx="27" cy="18" r="6" /><path d="M24 18h6M27 15v6" /></Glyph></ToolButton>
        <ToolButton label="グリッド設定" className="w-[23px]"><Tri /></ToolButton>
        <ToolButton label="ビデオ" className="w-[84px] border-l border-[#4a4e55]"><Glyph w={28}><path d="M3 3h22v30H3z" /><path d="M9 7h10v9H9zM9 20h10v9H9z" fill="#5e646c" /><path d="M6 6v25M22 6v25" strokeWidth="2" strokeDasharray="3 3" /></Glyph></ToolButton>
      </div>
      <div className="flex-1" />
      <ToolButton label="インストール" className="w-20"><Glyph w={44} h={38}><g fill="#c9cccf"><path d="M10 2h24v3H10z" opacity=".4" /><path d="M10 7h24v3H10z" opacity=".6" /><path d="M10 12h24v3H10z" opacity=".8" /></g><path d="M10 18h24v5h8L22 37 2 23h8z" fill="#e2e4e6" /></Glyph></ToolButton>
      <nav className="flex text-[16px]">
        <button className="w-[91px] border-l border-[#4a4e55]">スタート</button>
        <button className="w-[92px] border-l border-[#4a4e55]">ソング</button>
        <button aria-label="ソングを選択" className="flex w-[23px] items-center justify-center"><Tri /></button>
        <button className="w-[122px] border-l border-[#4a4e55] pr-5">プロジェクト</button>
      </nav>
    </header>
  );
}

/* ------------------------------------------------------------------ */
/* Left inspector                                                       */
/* ------------------------------------------------------------------ */

const params: [string, string, string][] = [
  ["テンポ", "タイムストレッチ", "select"],
  ["タイムストレッチ", "Drums", "latin"],
  ["グループ", "なし", "select"],
  ["レイヤー", "レイヤー 1", "select"],
  ["レイヤーはイベントに従う", "on", "check"],
  ["オーバーラップを再生", "", "check"],
  ["ディレイ", "0.00 ms", "text"],
  ["コードに従う", "オフ", "select"],
  ["チューンモード", "Default", "latin"],
];

function ParamRow({ name, value, kind }: { name: string; value: string; kind: string }) {
  return (
    <label className="flex flex-1 items-stretch">
      <span className={`flex items-center pl-2 ${kind === "check" ? "flex-1" : "w-[135px] border-b border-[#33363a]"} ${name === "タイムストレッチ" ? "text-[13px]" : ""}`}>{name}</span>
      {(kind === "select" || kind === "latin") && (
        <Pick label={name} value={value} className="my-px flex-1 bg-[#3a3b3c]" selectClass={kind === "latin" ? "pr-5 text-center text-[18px] text-[#c3c5c7]" : "pr-5 text-center text-[#c3c5c7]"} />
      )}
      {kind === "text" && <input defaultValue={value} className="my-px min-w-0 flex-1 bg-[#3a3b3c] text-center text-[17px] text-[#c3c5c7]" />}
      {kind === "check" && (
        <span className="relative my-px flex w-[33px] items-center justify-center bg-[#313437]">
          <input type="checkbox" defaultChecked={value === "on"} className="h-6 w-6 appearance-none border border-[#1d1f21] bg-[#2a2c2f]" />
          {value === "on" && (
            <svg viewBox="0 0 18 16" className="pointer-events-none absolute h-4 w-[18px]" fill="none" stroke="#fff" strokeWidth="2.500" aria-hidden>
              <path d="M2 9l5 5 9-13" />
            </svg>
          )}
        </span>
      )}
    </label>
  );
}

const dbMarks: [string, number][] = [["10", 24], ["6", 58], ["0", 112], ["-6", 165], ["-12", 208], ["-24", 261], ["-36", 313], ["-48", 349], ["-72", 378]];

function ChannelStrip() {
  const cells: React.ReactNode[] = [
    "M",
    "S",
    <svg key="k" viewBox="0 0 20 20" className="size-5" aria-hidden><circle cx="10" cy="10" r="9" fill="currentColor" /><path d="M10 11L3 3" stroke="#3a3d43" strokeWidth="4" /></svg>,
    <Dot key="r" />,
    <Half key="h" />,
    <Mono key="o" />,
  ];
  const names = ["ミュート", "ソロ", "モニター量", "録音", "モニター", "チャンネル形式"];
  return (
    <div className="flex h-[91px] border-t border-black">
      <div className="w-[151px]">
        <button className="flex h-[30px] w-full items-center justify-center bg-[#3b3c3e] text-[16px]">メイン</button>
        <div className="flex h-[30px] justify-center border-t border-[#141517] bg-[#25292c]"><span className="w-1 bg-[#2a9df0]" /></div>
        <div className="flex h-[30px] bg-[#6a717a] text-[17px] text-[#d2d5d8]">
          <span className="flex w-[76px] items-center justify-center">0dB</span>
          <span className="flex flex-1 items-center justify-center border-l border-[#4f555c]">&lt;C&gt;</span>
        </div>
      </div>
      <div className="flex flex-1 items-center justify-center border-l-2 border-black bg-[#3b3e42]">
        <div className="grid h-[77px] w-[121px] grid-cols-3 gap-px overflow-hidden rounded border-2 border-[#1c1d20] bg-[#1f2124]">
          {cells.map((c, i) => (
            <button key={i} aria-label={names[i]} className="flex items-center justify-center bg-[#3a3d43] text-[19px] text-[#b6b9bc]">{c}</button>
          ))}
        </div>
      </div>
    </div>
  );
}

function FaderArea() {
  return (
    <div className="flex h-[412px]">
      <div className="relative w-[76px] bg-[#6a717a]">
        <svg className="absolute inset-0 h-full w-full" aria-hidden>
          <rect x="23" y="2" width="19" height="16" fill="#4a4b55" />
          <rect x="23" y="20" width="19" height="376" fill="#222528" />
          <rect x="48" y="0" width="22" height="396" fill="#868a92" />
          <rect x="57" y="26" width="4" height="345" fill="#2b2d31" />
          {[62, 165, 205, 256, 305, 338, 364].map((y) => (
            <path key={y} d={`M50 ${y}h18`} stroke="#a2a6ad" strokeWidth="1" />
          ))}
          {dbMarks.map(([t, y]) => (
            <g key={t}>
              <path d={`M26 ${y}h14`} stroke={t === "0" ? "#8d939b" : "#1f4c6b"} strokeWidth="2" />
              <text x="22" y={y + 5} textAnchor="end" fontSize="13" fontWeight="bold" fill="#a6acb4">{t}</text>
            </g>
          ))}
        </svg>
        <input
          type="range"
          aria-label="フェーダー"
          defaultValue={75}
          className="absolute top-0 left-[45px] h-[396px] w-7 appearance-none bg-transparent [direction:rtl] [writing-mode:vertical-lr] [&::-webkit-slider-thumb]:h-14 [&::-webkit-slider-thumb]:w-7 [&::-webkit-slider-thumb]:appearance-none [&::-webkit-slider-thumb]:rounded [&::-webkit-slider-thumb]:border-2 [&::-webkit-slider-thumb]:border-[#4c4e52] [&::-webkit-slider-thumb]:bg-[linear-gradient(#e4e4e4_0,#f4f4f4_8%,#9a9a9a_12%,#fff_45%,#444_48%,#fff_52%,#f4f4f4_85%,#888_90%,#eee_100%)]"
        />
      </div>
      <div className="ml-px flex flex-1 flex-col gap-[3px] border-l border-black bg-black text-[16px]">
        <div className="flex h-[193px] items-start gap-[6px] bg-[#3b3e42] px-1 pt-[7px]">
          <Power />
          <span className="flex-1 leading-5">インサート</span>
          <Tri className="mt-1 text-[#7d8084]" />
          <svg viewBox="0 0 12 12" className="mt-1 size-3" stroke="#8b8e92" strokeWidth="3" aria-hidden><path d="M6 0v12M0 6h12" /></svg>
        </div>
        <div className="flex flex-1 items-start gap-[6px] bg-[#3b3e42] px-1 pt-[7px]">
          <Power />
          <span className="flex-1 leading-5">センド</span>
          <svg viewBox="0 0 12 12" className="mt-1 size-3" stroke="#8b8e92" strokeWidth="3" aria-hidden><path d="M6 0v12M0 6h12" /></svg>
        </div>
      </div>
    </div>
  );
}

const eventRows: [string, string][] = [
  ["スタート", "00001.01.01.00"],
  ["エンド", "00189.01.01.00"],
  ["ファイルテンポ", "未設定"],
  ["スピードアップ", "1.00"],
  ["トランスポーズ", "0"],
];

function Inspector() {
  return (
    <aside className="mt-[5px] ml-1 flex w-[285px] shrink-0 flex-col bg-[#27282b] text-[15px] text-[#b4b7ba]">
      <div className="flex h-12 items-center gap-6 border-b-[3px] border-black bg-[#25282a] pl-2">
        <svg viewBox="0 0 24 20" className="h-5 w-6" stroke="#a9acaf" strokeWidth="3" aria-hidden><path d="M0 2h24M0 7.500h24M0 13h24M0 18.500h24" /></svg>
        <span className="text-[28px] leading-none font-bold text-white">i</span>
      </div>
      <div className="flex h-10 bg-[#555b63] text-[19px] text-[#e1e3e5]">
        <span className="w-[15px] bg-[#ff568c]" />
        <span className="flex w-[41px] items-center justify-center bg-[#3d4046] text-[17px] font-bold">10</span>
        <span className="flex flex-1 items-center pl-[9px]">10-yoshimi-vo</span>
        <span className="flex items-center pr-1 text-white"><WaveGlyph /></span>
      </div>
      <div className="mt-px flex h-[312px] flex-col">
        {params.map(([n, v, k]) => (
          <ParamRow key={n} name={n} value={v} kind={k} />
        ))}
      </div>
      <div className="mt-[15px] flex h-[35px]">
        <span className="flex w-[135px] items-center pl-2 text-[13px]">オートメーション</span>
        <span className="my-px flex-1 bg-[#2f3235]" />
      </div>
      <div className="flex h-[35px]">
        <span className="flex w-[135px] items-center gap-2 pl-2"><Power />パラメーター</span>
        <Pick label="パラメーター" value="表示: オフ" className="my-px flex-1 bg-[#3a3b3c]" selectClass="pr-4 text-center text-[16px]" />
      </div>
      <button aria-label="メモ" className="mt-px flex h-[33px] items-center bg-[#3a3b3c] pl-2">
        <svg viewBox="0 0 26 22" className="h-[22px] w-[26px]" fill="none" stroke="#d7d9db" strokeWidth="2" aria-hidden>
          <path d="M14 2H2v18h14v-6M5 6h7M5 10h6M5 14h4" /><path d="M12 14L22 3l2 2-10 11z" fill="#d7d9db" />
        </svg>
      </button>
      <div className="flex-1" />
      <Grip />
      <div className="flex h-[26px] items-center justify-center bg-[#ff568c] text-[17px] font-bold text-[#22171c]">10-yoshimi-vo</div>
      <div className="mt-px flex h-[34px]">
        <span className="flex w-[77px] items-center bg-[#25292c] pl-2">イン</span>
        <Pick label="イン" value="入力 L" className="flex-1 bg-[#3d3e40]" selectClass="pl-[10px] text-[17px]" />
      </div>
      <ChannelStrip />
      <FaderArea />
      <div className="mt-px h-[6px] bg-[#ff568c]" />
      <Grip />
      <div className="flex h-10 items-center bg-[#53585f] text-[19px] text-[#dadcde]">
        <span className="mr-[11px] h-full w-[15px] bg-[#ff568c]" />10-yoshimi-vo
      </div>
      <div className="mt-px flex h-[206px] flex-col text-[16px]">
        <div className="flex flex-1">
          <span className="flex w-[135px] items-center gap-2 pl-3"><Tri dir="right" className="text-[#c9cbcd]" /><span className="text-[#cfd1d3]">イベントFX</span></span>
          <button className="my-px flex-1 bg-[#ff9932] text-[#2a1a0b]">レンダー</button>
        </div>
        {eventRows.map(([n, v]) => (
          <label key={n} className="flex flex-1">
            <span className="flex w-[135px] items-center pl-2">{n}</span>
            <input defaultValue={v} className={`my-px min-w-0 flex-1 bg-[#3a3b3c] text-[17px] text-[#c3c5c7] ${v.length > 8 ? "pr-[6px] text-right text-[18px]" : "text-center"}`} />
          </label>
        ))}
      </div>
    </aside>
  );
}

/* ------------------------------------------------------------------ */
/* Arrangement                                                          */
/* ------------------------------------------------------------------ */

type Track = { n: string; name: string; color: string; dim: string; bg: string; input: string; stereo?: boolean; wave?: Segment[]; waveFill?: string; selected?: boolean; scrolled?: boolean };

const tracks: Track[] = [
  { n: "7", name: "トラック 7", color: "bg-[#a6ff92]", dim: "bg-[#77b56b]", bg: "bg-[#a6ff92]", input: "入力 L+R", stereo: true, scrolled: true },
  { n: "8", name: "08-se1", color: "bg-[#8bff13]", dim: "bg-[#66b80f]", bg: "bg-[#8bff13]", input: "入力 L+R", stereo: true },
  { n: "9", name: "09-se2", color: "bg-[#dfff02]", dim: "bg-[#a0b305]", bg: "bg-[#dfff02]", input: "入力 L+R", stereo: true },
  { n: "10", name: "10-yoshimi-vo", color: "bg-[#ff568c]", dim: "bg-[#b33f68]", bg: "bg-[#da6b9b]", input: "入力 L", wave: yoshimi, waveFill: "#002226", selected: true },
  { n: "11", name: "11-chika-vo", color: "bg-[#ff005a]", dim: "bg-[#b30442]", bg: "bg-[#ff005a]", input: "入力 L", wave: chika, waveFill: "#620022" },
  { n: "12", name: "12-yuna-vo", color: "bg-[#0cbeff]", dim: "bg-[#0d88b5]", bg: "bg-[#0cbeff]", input: "入力 L", wave: yuna, waveFill: "#054c66" },
  { n: "13", name: "13-kasumi-vo", color: "bg-[#10a9ff]", dim: "bg-[#0f7ab5]", bg: "bg-[#10a9ff]", input: "入力 L", wave: kasumi, waveFill: "#064166" },
  { n: "14", name: "14-mei-vo", color: "bg-[#0a6bff]", dim: "bg-[#0b50b5]", bg: "bg-[#0a6bff]", input: "入力 L", wave: mei, waveFill: "#042a66" },
];

function TrackHeader({ t }: { t: Track }) {
  const s = t.selected;
  const btn = `flex flex-1 items-center justify-center ${s ? "bg-[#7b828a] text-white" : "bg-[#505355] text-[#b9bbbd]"}`;
  return (
    <div className={`mb-[2px] flex h-[88px] ${s ? "bg-[#656b73] text-[#eceeef]" : "bg-[#3b3e42] text-[#9c9fa2]"}`}>
      <div className={`flex w-[15px] flex-col justify-end ${t.color}`}>
        <div className={`flex h-[18px] items-center justify-center border-t border-black/40 ${t.dim}`}>
          <svg viewBox="0 0 13 10" className="h-[10px] w-[13px]" fill="none" stroke="#fff" strokeOpacity=".6" aria-hidden><path d="M1 8l3-6 4 6 4-7" /></svg>
        </div>
      </div>
      <div className={`w-[39px] pt-[9px] pr-2 text-right text-[17px] leading-6 font-bold ${s ? "text-white" : "text-[#a4a7aa]"}`}>{t.scrolled ? null : t.n}</div>
      <div className="flex flex-1 flex-col pt-[3px]">
        <div className="flex h-[34px] items-center">
          <div className="flex h-[34px] w-[142px] gap-px overflow-hidden rounded border-2 border-[#26282b] bg-[#2b2d30] text-[18px]">
            <button aria-label={`${t.name} ミュート`} className={btn}>{t.scrolled ? null : "M"}</button>
            <button aria-label={`${t.name} ソロ`} className={btn}>{t.scrolled ? null : "S"}</button>
            <button aria-label={`${t.name} 録音`} className={btn}><Dot /></button>
            <button aria-label={`${t.name} モニター`} className={btn}><Half /></button>
          </div>
          <span className="flex-1 pl-[7px] text-[19px] whitespace-nowrap">{t.scrolled ? null : t.name}</span>
          <WaveGlyph className={s ? "mr-[14px] text-white" : "mr-[14px] text-[#a9acaf]"} />
        </div>
        <input
          type="range"
          aria-label={`${t.name} 音量`}
          defaultValue={75}
          className={`mt-2 h-[5px] w-[196px] appearance-none [&::-webkit-slider-thumb]:w-0 [&::-webkit-slider-thumb]:appearance-none ${s ? "bg-[linear-gradient(to_right,#d3d5d7_75%,#44474d_75%)]" : "bg-[linear-gradient(to_right,#888b8f_75%,#2b2d30_75%)]"}`}
        />
        <div className="mt-[10px] flex h-[25px] w-[196px] gap-px">
          <Pick label={`${t.name} 入力`} value={t.input} className={s ? "flex-1 bg-[#7b828a]" : "flex-1 bg-[#505355]"} selectClass="pl-[6px] text-[17px]" />
          <button aria-label={`${t.name} チャンネル`} className={`flex w-9 items-center justify-center ${s ? "bg-[#7b828a]" : "bg-[#505355] text-[#b1b3b5]"}`}>{t.stereo ? <Stereo /> : <Mono />}</button>
        </div>
      </div>
      <div className={s ? "w-[13px] bg-[#3e4247]" : "w-[13px] bg-[#36393d]"} />
    </div>
  );
}

function Lane({ t }: { t: Track }) {
  return (
    <div className={`mb-[2px] h-[88px] overflow-hidden ${t.bg} ${t.selected ? "border-y border-[#14d6f2]" : ""}`}>
      <svg className="h-full w-full" aria-hidden>
        {t.stereo && <path d="M0 21.500h3000M0 63.500h3000" stroke="#000" strokeOpacity=".14" />}
        {t.n === "8" && (
          <g fill="#3a7010">
            <path d={noisePath(406, 838, 22, (v) => 7 * (1 - v) + 0.3, 1)} />
            <path d={noisePath(406, 800, 64, (v) => 7 * (1 - v) + 0.2, 1)} />
            <path d="M857 21h3v2h-3zM876 21h2v2h-2zM903 21h4v2h-4zM858 63h2v2h-2zM878 63h3v2h-3z" />
          </g>
        )}
        {t.wave && (
          <g>
            <path d="M0 42.500h3000" stroke="#000" strokeOpacity=".3" />
            {t.wave.map((w, i) => (
              <path key={i} d={wavePath(w, t.selected ? 42 : 43)} fill={t.waveFill} />
            ))}
            <path d="M0 42.500h3000" stroke="#fff" strokeOpacity=".1" />
          </g>
        )}
        {t.selected && pitchTrace.map(([a, b, y, h]) => <rect key={a} x={a} y={y - 1} width={b - a} height={h} fill="#e02fe0" />)}
      </svg>
    </div>
  );
}

function Timeline() {
  const bars = [52, 53, 54, 55, 56, 57, 58, 59, 60];
  return (
    <div className="flex h-12 flex-col border-b-[3px] border-black">
      <div className="h-[9px] bg-[#3b3e42]" />
      <svg className="w-full flex-1 bg-[#2b2c2f]" aria-hidden>
        {Array.from({ length: 72 }, (_, i) => {
          const x = -73 + i * 30;
          const h = i % 8 === 0 ? 13 : i % 2 === 0 ? 6 : 3;
          return <rect key={i} x={x} y={36 - h} width={i % 8 === 0 ? 2 : 1} height={h} fill="#d4d6d8" />;
        })}
        {bars.map((b, i) => (
          <text key={b} x={-73 + i * 240} y="18" fontSize="18" fill="#d4d6d8">{b}</text>
        ))}
      </svg>
    </div>
  );
}

function Arrangement() {
  return (
    <section className="mt-px border-[3px] border-[#3a708f] bg-[#27282b]">
      <div className="flex border border-black">
        <div className="flex w-[383px] shrink-0 flex-col border-r border-black bg-[#2e3136]">
          <div className="flex h-12 shrink-0 items-center border-b-[3px] border-black bg-[#25282a] pr-[10px] pl-[9px] text-[#aeb1b4]">
            <Wrench className="size-6 -scale-x-100 fill-current" strokeWidth={1} />
            <div className="flex flex-1 items-center justify-end gap-[16px]">
              <svg viewBox="0 0 36 24" className="h-6 w-9" fill="none" stroke="currentColor" strokeWidth="2" aria-hidden><path d="M2 21Q6 3 11 3t6 12 7 4L33 3" /><g fill="currentColor" stroke="none"><circle cx="3" cy="21" r="2.500" /><circle cx="23" cy="21" r="2.500" /><circle cx="33" cy="3" r="2.500" /></g></svg>
              <svg viewBox="0 0 26 24" className="h-6 w-[26px]" fill="none" stroke="currentColor" strokeWidth="2" aria-hidden><path d="M2 24V2h22l-7 13H2" /></svg>
              <svg viewBox="0 0 24 24" className="size-6 fill-current" aria-hidden><path d="M2 1h3v4H2zM7 1h7v4H7zM16 1h8v4h-8zM10 7h6v4h-6zM16 7h5v4h-5zM2 19h6v5H2zM10 13h4v4h-4zM10 19h4v5h-4zM15 13h6v4h-6z" /></svg>
              <svg viewBox="0 0 26 24" className="h-6 w-[26px] fill-current" aria-hidden><path d="M8 1h5v3h-2v14q0 6-5 6t-5-4 4-4h3zM15 1h4v3h-4zM21 1h4v3h-4zM15 6h8v4h-8zM15 12h4v3h-4zM20 12h5v3h-5z" /></svg>
              <svg viewBox="0 0 24 24" className="size-6" fill="none" stroke="currentColor" strokeWidth="2" aria-hidden><circle cx="12" cy="12" r="10" /><path d="M13 3v9l4 5M13 12l-5 5" /></svg>
              <svg viewBox="0 0 22 22" className="size-[22px]" stroke="currentColor" strokeWidth="5" aria-hidden><path d="M11 0v22M0 11h22" /></svg>
            </div>
          </div>
          <div className="h-[693px] overflow-hidden bg-[#1d1e20]">
            <div className="-mt-[27px]">{tracks.map((t) => <TrackHeader key={t.n} t={t} />)}</div>
          </div>
          <div className="flex-1" />
          <div className="flex h-[26px] items-stretch text-[15px] text-[#c3c5c7]">
            <button className="w-[73px] border-r border-[#232527] bg-[#2b2d30]">M</button>
            <button className="w-[73px] border-r border-[#232527] bg-[#2b2d30]">S</button>
            <span className="w-[72px] bg-[#2b2d30]" />
            <button className="flex flex-1 items-center justify-end gap-6 bg-[#242628] pr-[6px] text-[#a9acaf]">
              <span className="pr-3">標準</span>
              <Tri className="text-[#7b7e82]" />
              <svg viewBox="0 0 13 14" className="h-[14px] w-[13px]" stroke="#6d7074" strokeWidth="3" aria-hidden><path d="M0 2h13M0 7h13M0 12h13" /></svg>
            </button>
          </div>
        </div>
        <div className="flex min-w-0 flex-1 flex-col">
          <Timeline />
          <div className="flex">
            <div className="relative min-w-0 flex-1">
              <div className="h-[691px] overflow-hidden bg-[#2d2f33]">
                <div className="-mt-[27px]">{tracks.map((t) => <Lane key={t.n} t={t} />)}</div>
              </div>
              <svg className="block h-[53px] w-full bg-[#222325]" aria-hidden>
                {Array.from({ length: 33 }, (_, i) => (
                  <rect key={i} x={-73 + i * 60} y="0" width="2" height="53" fill={i % 4 === 0 ? "#3b3d40" : "#2d2f31"} />
                ))}
              </svg>
              <div className="absolute inset-y-0 left-[30px] w-px bg-[#a9abad]/80" />
            </div>
            <div className="flex w-[25px] flex-col items-center justify-between pt-2 pb-2 text-[#6b6e72]">
              <Tri dir="up" />
              <span className="mt-[304px] mb-4 w-2 flex-1 bg-[#6d6e70]" />
              <Tri />
            </div>
          </div>
          <div className="flex h-[26px] items-center pr-1 pl-2 text-[#6b6e72]">
            <Tri dir="left" />
            <span className="ml-[442px] h-2 w-16 bg-[#6d6e70]" />
            <span className="flex-1" />
            <Tri dir="right" className="mr-[19px] text-[#8b8e92]" />
            <Tri dir="up" />
            <input type="range" aria-label="横ズーム" defaultValue={25} className="mx-1 h-[5px] w-[100px] appearance-none bg-[#5c6069] [&::-webkit-slider-thumb]:h-5 [&::-webkit-slider-thumb]:w-[6px] [&::-webkit-slider-thumb]:appearance-none [&::-webkit-slider-thumb]:bg-[#7b7f88]" />
            <svg viewBox="0 0 20 16" className="mx-1 h-4 w-5 fill-current" aria-hidden><path d="M10 0l10 16H0z" /></svg>
            <svg viewBox="0 0 20 20" className="ml-2 size-5 fill-[#4b4e53]" aria-hidden><path d="M10 0h10v5H10zM10 7h10v5H10zM0 13h6v3H0zM0 17h6v3H0z" /></svg>
          </div>
        </div>
      </div>
    </section>
  );
}

/* ------------------------------------------------------------------ */
/* Pitch editor                                                         */
/* ------------------------------------------------------------------ */

const scaleRows = ["A#", "A", "G#", "G", "F#", "F", "E", "D#", "D", "C#", "C", "B", "A#", "A", "G#", "G", "F#", "F", "E", "D#", "D"];
const outOfScale = ["A#", "G#", "F", "D#", "C#"];
const blackKeys = ["A#", "G#", "F#", "D#", "C#"];

function MelButton({ label, active, className = "", children }: { label: string; active?: boolean; className?: string; children: React.ReactNode }) {
  return (
    <button aria-label={label} className={`relative flex items-center justify-center ${active ? "bg-[#f7f7f7]" : "bg-[linear-gradient(#cfcfcf,#b4b4b4)]"} ${className}`}>
      {children}
    </button>
  );
}

const Caret = ({ className = "" }: { className?: string }) => (
  <svg viewBox="0 0 8 5" className={`h-[5px] w-[7px] fill-black ${className}`} aria-hidden><path d="M0 0h8L4 5z" /></svg>
);

function MelToolbar() {
  const ic = { width: 24, height: 26, viewBox: "0 0 24 26", stroke: "#111", fill: "#111" } as const;
  return (
    <div className="mx-1 mt-[3px] flex h-[58px] shrink-0 items-center rounded-t bg-[#bfbfbf] pl-[19px]">
      <button aria-label="情報パネル"><svg width="26" height="24" viewBox="0 0 26 24" aria-hidden><path d="M1 1h24v22H1z" fill="#c9c9c9" stroke="#222" strokeWidth="2" /><path d="M1 1h8v22H1z" fill="#111" /></svg></button>
      <MelButton label="自動スクロール" className="ml-5 h-[34px] w-[34px] rounded border border-[#8c8c8c]">
        <svg {...ic} aria-hidden><path d="M5 8h11v5H5z" /><path d="M12 3v3h6v10h-6v5" fill="none" strokeWidth="2" /><path d="M9 20h6l-3 4z" stroke="none" /></svg>
      </MelButton>
      <div className="ml-4 flex h-[34px] w-[106px] items-stretch rounded border border-[#9a9a9a] bg-[#c5c5c5]">
        <input aria-label="テンポ" defaultValue="150 (147)" className="w-[82px] bg-transparent text-center text-[16px] text-[#222]" />
        <MelButton label="テンポメニュー" className="flex-1 border-l border-[#9a9a9a]"><Caret className="mt-3" /></MelButton>
      </div>
      <div className="ml-[576px] flex h-9 w-[104px] divide-x divide-[#999] overflow-hidden rounded-md border border-[#999]">
        <MelButton label="全体" active className="flex-1"><svg width="24" height="22" viewBox="0 0 24 22" fill="#f4a26b" stroke="#c8402f" aria-hidden><path d="M11 6q1-5 6-4l5 3-5 4q-5 1-6-3zM2 15q1-5 6-4l4 3-5 5q-5 0-5-4zM10 13q2-5 3-6" /></svg></MelButton>
        <MelButton label="単独" className="flex-1"><svg width="14" height="12" viewBox="0 0 16 16" fill="#f08a5c" stroke="#c8402f" aria-hidden><path d="M2 6q3-4 7-2l5 4-5 4q-4 2-7-2z" /></svg></MelButton>
        <MelButton label="ノート編集" className="flex-1"><Wrench className="size-[22px] fill-[#111]" strokeWidth={2} color="#111" /></MelButton>
      </div>
      <div className="ml-[14px] flex h-9 w-[208px] divide-x divide-[#999] border border-[#999]">
        <MelButton label="メインツール" active className="flex-1"><svg {...ic} aria-hidden><path d="M3 3v17l4-4 3 7 3-1-3-7h5z" /></svg><Caret className="absolute right-[2px] bottom-1" /></MelButton>
        <MelButton label="ピッチ" className="flex-1"><svg {...ic} aria-hidden><path d="M11 3h2v20h-2zM8 7l4-5 4 5zM8 19l4 5 4-5z" /><ellipse cx="12" cy="13" rx="4" ry="3" fill="#ccc" strokeWidth="2" /></svg><Caret className="absolute right-[2px] bottom-1" /></MelButton>
        <MelButton label="フォルマント" className="flex-1"><svg {...ic} strokeWidth="2" fill="none" aria-hidden><path d="M2 19h21M3 19V6M7 19V9M11 19v-6M15 19v-4M19 19v-3" /></svg></MelButton>
        <MelButton label="音量" className="flex-1"><svg {...ic} strokeWidth="2" aria-hidden><path d="M6 9q7-1 12 4-5 5-12 4-2-4 0-8z" fill="#bbb" /></svg></MelButton>
        <MelButton label="タイミング" className="flex-1"><svg {...ic} aria-hidden><path d="M1 13l5-4v3h3l3-3 3 3h3V9l5 4-5 4v-3h-3l-3 3-3-3H6v3z" /></svg><Caret className="absolute right-[2px] bottom-1" /></MelButton>
        <MelButton label="分割" className="flex-1"><svg {...ic} strokeWidth="2" aria-hidden><path d="M12 2v22M4 13h16" /><path d="M2 13l4-3v6zM22 13l-4-3v6z" strokeWidth="1" /></svg><Caret className="absolute right-[2px] bottom-1" /></MelButton>
      </div>
      <input aria-label="ノート" defaultValue="-" className="ml-[10px] h-7 w-[107px] rounded border border-[#999] bg-[#bababa] text-center text-[14px] text-[#555]" />
      <input aria-label="セント" defaultValue="-" className="ml-[13px] h-7 w-[107px] rounded border border-[#999] bg-[#bababa] text-center text-[14px] text-[#555]" />
      <MelButton label="ピッチ補正" className="ml-3 h-9 w-12 rounded-md border border-[#999]"><svg {...ic} aria-hidden><path d="M11 3h2v20h-2zM9 6l3-4 3 4zM9 20l3 4 3-4z" /><path d="M1 9l5 1M18 10l5-1M1 17l5-1M18 16l5 1" strokeWidth="2" /><circle cx="12" cy="13" r="3" fill="#ccc" strokeWidth="2" /></svg></MelButton>
      <MelButton label="クオンタイズ" className="ml-[10px] h-9 w-12 rounded-md border border-[#999]"><svg {...ic} aria-hidden><path d="M1 13l5-4v3l3-1 3-2 3 2 3 1V9l5 4-5 4v-3l-3 1-3 2-3-2-3-1v3z" /><path d="M9 2v5M15 2v5M9 19v5M15 19v5" strokeWidth="2" /></svg></MelButton>
    </div>
  );
}

function NoteGrid() {
  return (
    <svg className="h-full w-full bg-[#fafafa]" aria-hidden>
      <defs>
        <linearGradient id="blob" x1="0" x2="0" y1="0" y2="1">
          <stop offset="0" stopColor="#a3106e" />
          <stop offset=".1" stopColor="#c32b45" />
          <stop offset=".25" stopColor="#e0683f" />
          <stop offset=".4" stopColor="#f6c36f" />
          <stop offset=".5" stopColor="#fff9bd" />
          <stop offset=".6" stopColor="#f9d57f" />
          <stop offset=".75" stopColor="#e0683f" />
          <stop offset=".9" stopColor="#c32b45" />
          <stop offset="1" stopColor="#a3106e" />
        </linearGradient>
      </defs>
      {scaleRows.map((r, i) => (blackKeys.includes(r) ? <rect key={i} x="0" y={i * 30 - 2} width="3000" height="30" fill="#ebebeb" /> : null))}
      <path d="M0 178h3000M0 328h3000M0 538h3000" stroke="#f0f0f0" strokeWidth="2" />
      {Array.from({ length: 52 }, (_, i) => (
        <rect key={i} x={Math.round(-29 + i * 39.75)} y="0" width="1" height="700" fill={i % 4 === 0 ? "none" : "#ececec"} />
      ))}
      {Array.from({ length: 13 }, (_, i) => (
        <rect key={i} x={130 + i * 159} y="0" width="1" height="700" fill="#b5b5b5" />
      ))}
      {zones.map((z, zi) => (
        <g key={zi}>
          {z.blobs.map(([cy, d], i) => (
            <path key={i} d={blobPath(z, cy, d)} fill="url(#blob)" stroke="#b3202e" strokeWidth="1" />
          ))}
        </g>
      ))}
      {zones.map((z, zi) => (
        <g key={zi} fill="none" strokeLinejoin="round">
          {z.curves.map((c, i) => (
            <polyline key={i} points={curvePoints(z, c)} stroke="#f5c9b0" strokeOpacity=".85" strokeWidth="4" />
          ))}
          {z.curves.map((c, i) => (
            <polyline key={`l${i}`} points={curvePoints(z, c)} stroke="#9c2114" strokeWidth="1.500" />
          ))}
        </g>
      ))}
    </svg>
  );
}

const overviewBursts = [[205, 234], [244, 283], [295, 560], [564, 660], [829, 859], [869, 909], [917, 946], [952, 983], [991, 1182], [1186, 1283], [1373, 1548], [1557, 1634], [1641, 1735]];

function PitchEditor() {
  return (
    <section className="mr-1 mt-[3px] ml-[3px] flex min-h-0 flex-1 flex-col border border-black bg-[#5e5e5e] font-['Noto_Sans','Noto_Sans_CJK_JP',sans-serif]">
      <div className="flex h-8 shrink-0 items-center bg-[#1c1d1f] pr-[16px] pl-px font-['Liberation_Sans','Noto_Sans_CJK_JP',sans-serif] text-[17px] text-[#b9bbbd]">
        <h2 className="flex-1"><span className="text-[14px]">オーディオエフェクト</span> · 10-yoshimi-vo · 1 - Melodyne</h2>
        <button aria-label="切り離す"><svg viewBox="0 0 16 16" className="size-4 fill-[#c5c7c9]" aria-hidden><path d="M5 1h10v10l-3-3-8 7-3-3 7-8z" /></svg></button>
        <button aria-label="閉じる" className="ml-4"><svg viewBox="0 0 16 16" className="size-4" stroke="#c5c7c9" strokeWidth="4" aria-hidden><path d="M2 2l12 12M14 2L2 14" /></svg></button>
      </div>
      <div className="mr-[2px] flex h-[30px] shrink-0 items-center bg-[linear-gradient(#dedede,#cecece)] pl-5 text-[15px] text-[#161616]">
        <nav className="flex flex-1 gap-[22px]">
          {["設定", "編集", "アルゴリズム", "オプション", "ヘルプ"].map((m) => <button key={m} className={m.length === 2 ? "text-[16px]" : ""}>{m}</button>)}
        </nav>
        <span className="font-['Inter',sans-serif] text-[19px] leading-none font-black text-[#1b1b1b]">melodyne</span>
        <span className="mr-[38px] ml-[2px] font-['Inter',sans-serif] text-[15px] leading-none text-[#e8862e]">editor</span>
      </div>
      <MelToolbar />
      <div className="mx-1 mt-[6px] mb-[2px] flex min-h-0 flex-1 flex-col bg-[#bfbfbf]">
        <div className="flex min-h-0 flex-1">
          <div className="flex w-[246px] shrink-0 flex-col">
            <div className="flex h-[46px] shrink-0 border-b-2 border-[#8a8a8a] text-[15px] text-[#111]">
              <div className="flex w-[36px] flex-col border-r border-[#8a8a8a]">
                <button aria-label="チューニング" className="flex flex-1 items-center justify-center gap-1 bg-[#d0d0d0]">
                  <svg viewBox="0 0 6 14" className="h-[14px] w-[6px]" fill="none" stroke="#111" strokeWidth="2" aria-hidden><path d="M1 0v6q2 3 4 0V0M3 7v7" /></svg>
                  <Caret className="w-[6px]" />
                </button>
                <span className="flex flex-1 items-center justify-center border-t border-[#8a8a8a] bg-[#dadada] text-[13px]">440</span>
              </div>
              <div className="flex w-[152px] flex-col border-r border-[#8a8a8a] text-center">
                <button className="relative flex-1 bg-[linear-gradient(#d8d8d8,#c4c4c4)] leading-5">音階<Caret className="absolute top-[10px] right-2 w-[6px]" /></button>
                <span className="flex-1 border-t border-[#8a8a8a] bg-[#cbcbcb] text-[14px] leading-5 text-[#777]">マイナー</span>
              </div>
              <div className="relative flex flex-1 items-center justify-center">
                <svg viewBox="0 0 24 42" className="h-[42px] w-6" fill="none" stroke="#fff" strokeWidth="6" strokeLinejoin="round" aria-hidden>
                  <path d="M14 34q-1 5-5 4-3-2-1-4M13 37L9 11q0-7 4-8 3 4-1 9-8 6-8 12t8 6q6-1 5-7-2-4-6-2-4 3 0 6" />
                  <path d="M14 34q-1 5-5 4-3-2-1-4M13 37L9 11q0-7 4-8 3 4-1 9-8 6-8 12t8 6q6-1 5-7-2-4-6-2-4 3 0 6" stroke="#111" strokeWidth="2" />
                </svg>
                <Caret className="absolute right-2 bottom-[6px]" />
              </div>
            </div>
            <div className="min-h-0 flex-1 overflow-hidden bg-[#cbcbcb]">
              {scaleRows.map((r, i) => {
                const out = outOfScale.includes(r);
                const root = r === "E";
                return (
                  <div key={i} className={`flex ${i === 0 ? "h-7" : "h-[30px]"}`}>
                    <div className="flex w-[36px] items-center border-r border-[#999] pl-1">
                      <svg viewBox="0 0 26 16" className="h-4 w-[26px]" fill="none" stroke={root ? "#222" : "#999"} strokeWidth={root ? 2 : 1.500} aria-hidden>
                        {i === 1 ? <path d="M0 6h11q2-5 6-5 5 2 5 7t-5 7q-4 0-6-5H0" /> : <path d="M0 5.500h15q3 2 0 5H0" />}
                      </svg>
                    </div>
                    <button className={`relative flex w-[152px] items-center justify-center text-[13px] ${out ? "bg-[#cbcbcb] text-[#9a9a9a]" : root ? "bg-[#e0e0e0] text-black" : "bg-[#e0e0e0] text-[#555]"} ${root ? "border border-[#444]" : "border-b border-[#8d8d8d] border-r"}`}>
                      {root ? "E マイナー" : r}
                      <svg viewBox="0 0 8 13" className="absolute right-3 h-[13px] w-2 fill-[#8a8a8a]" aria-hidden>
                        {!out && <path d="M0 5h8L4 0z" />}
                        <path d="M0 8h8l-4 5z" />
                      </svg>
                    </button>
                    <div className="flex flex-1 items-center justify-center border-b border-r border-[#a5a5a5] bg-[#dfdfdf] text-[14px] text-[#777]">
                      {root ? (i === 6 ? "4" : "3") : ""}
                    </div>
                  </div>
                );
              })}
            </div>
          </div>
          <div className="flex min-w-0 flex-1 flex-col border-r border-[#999]">
            <svg className="h-[46px] w-full shrink-0" aria-hidden>
              <path d="M0 44V29.500h1970V44M0 44.500h3000" fill="none" stroke="#8a8a8a" />
              {Array.from({ length: 50 }, (_, i) => (
                <rect key={i} x={Math.round(11 + i * 39.75)} y="40" width="1" height="5" fill="#8a8a8a" />
              ))}
              {Array.from({ length: 12 }, (_, i) => (
                <g key={i}>
                  <rect x={130 + i * 159} y="14" width="1" height="31" fill="#8a8a8a" />
                  <text x={133 + i * 159} y="23" fontSize="16" fill="#222">{29 + i}</text>
                </g>
              ))}
            </svg>
            <div className="min-h-0 flex-1"><NoteGrid /></div>
          </div>
          <div className="flex w-[25px] shrink-0 flex-col items-center">
            <div className="relative flex h-[46px] w-full items-center">
              <svg viewBox="0 0 16 26" className="absolute top-2 -left-3 h-[26px] w-4" aria-hidden><path d="M11 2v20q-6 4-9 0 0-5 6-4h3z" fill="#fff" stroke="#fff" strokeWidth="4" /><path d="M10 2h2v18q-5 6-9 2 0-5 7-4z" fill="#111" /></svg>
              <Caret className="absolute right-2 bottom-2" />
            </div>
            <div className="relative flex w-full flex-1 flex-col items-center">
              <span className="mt-[251px] h-[164px] w-[11px] rounded-full bg-[#6b6b6b]" />
              <span className="mt-[132px] h-2 w-2 rounded-full bg-black" />
              <span className="h-12 w-px bg-[#8a8a8a]" />
            </div>
          </div>
        </div>
        <div className="flex h-[27px] shrink-0 items-center border-t-2 border-[#999] pl-2">
          <svg viewBox="0 0 14 20" className="h-[18px] w-[13px]" aria-hidden><path d="M1 0q8 2 8 5L5 9l8 5q-4 6-12 6z" fill="#111" /></svg>
          <svg viewBox="0 0 18 18" className="ml-[10px] size-[17px]" fill="none" stroke="#111" strokeWidth="2.500" aria-hidden><path d="M1 5l6 6q5-1 3-5L6 1M10 10l7 7" /></svg>
          <svg viewBox="0 0 18 20" className="ml-2 h-5 w-[18px] rounded bg-[#f2f2f2]" stroke="#111" strokeWidth="2" fill="none" aria-hidden><path d="M4 3v15M7 2v15M2 8l7-2M2 13l7-2M12 3v15M15 2v15M10 8l7-2M10 13l7-2" /></svg>
          <svg className="ml-[49px] h-5 min-w-0 flex-1" aria-hidden>
            <path d="M0 10.500h2080" stroke="#aaa" />
            <g fill="#919191">
              {overviewBursts.map(([a, b]) => <path key={a} d={noisePath(a, b, 10, (t) => 11 * Math.min(1, Math.min(t, 1 - t) * 6 + 0.3), 2)} />)}
            </g>
            <rect x="301" y="5" width="118" height="11" rx="5.500" fill="#555" fillOpacity=".85" />
          </svg>
          <svg viewBox="0 0 20 18" className="mr-7 h-[18px] w-5" stroke="#111" aria-hidden><path d="M10 2v15" strokeWidth="2" /><path d="M6 1h8l-4 4zM1 6v7l4-3.500zM19 6v7l-4-3.500z" /></svg>
        </div>
      </div>
    </section>
  );
}

/* ------------------------------------------------------------------ */
/* Browser                                                              */
/* ------------------------------------------------------------------ */

type Item = { kind: "chain" | "mix" | "fav" | "recent" | "open" | "closed" | "vendor" | "fx"; name: string };

const fx = (...names: string[]): Item[] => names.map((name) => ({ kind: "fx", name }));

const items: Item[] = [
  { kind: "chain", name: "FXチェーン" },
  { kind: "mix", name: "ミックスFX" },
  { kind: "fav", name: "お気に入り" },
  { kind: "recent", name: "最近使った項目" },
  { kind: "open", name: "Antares" },
  ...fx("Auto-Key", "Auto-Tune Pro"),
  { kind: "open", name: "Celemony" },
  ...fx("Melodyne"),
  { kind: "open", name: "Cherry Audio" },
  ...fx("Voltage Modular FX"),
  { kind: "closed", name: "Flux:: sound and picture development" },
  { kind: "open", name: "iZotope, Inc." },
  ...fx(
    "Neutron 3", "Neutron 3 Compressor", "Neutron 3 Equalizer", "Neutron 3 Exciter", "Neutron 3 Gate", "Neutron 3 Sculptor",
    "Neutron 3 Transient Shaper", "Neutron 3 Visual Mixer", "Ozone 8 Elements", "Relay", "RX 7 Breath Control", "RX 7 Connect",
    "RX 7 De-click", "RX 7 De-clip", "RX 7 De-crackle", "RX 7 De-ess", "RX 7 De-hum", "RX 7 De-plosive", "RX 7 De-reverb",
    "RX 7 Monitor", "RX 7 Mouth De-click", "RX 7 Spectral De-noise", "RX 7 Voice De-noise", "Tonal Balance Control",
  ),
  { kind: "closed", name: "mu-station" },
  { kind: "vendor", name: "PreSonus" },
  { kind: "closed", name: "Synchro Arts Ltd" },
  { kind: "open", name: "Zynaptiq" },
  ...fx("ADAPTIVERB", "INTENSITY"),
];

function ItemIcon({ kind }: { kind: Item["kind"] }) {
  if (kind === "fx")
    return (
      <span className="flex h-6 w-6 shrink-0 flex-col overflow-hidden rounded-[3px] text-center">
        <span className="h-[15px] bg-[#5a5d62] text-[13px] leading-[15px] font-bold text-[#e4e6e8]">FX</span>
        <svg viewBox="0 0 24 9" className="h-[9px] w-6 bg-[#a5a8ac]" fill="#4b4e52" aria-hidden><path d="M6 1h5l-2 7H4zM13 1h6l-2 7h-5z" /></svg>
      </span>
    );
  if (kind === "fav") return <Star className="size-6 shrink-0" strokeWidth={2} color="#c9cbcd" />;
  if (kind === "recent") return <Clock className="size-6 shrink-0" strokeWidth={2} color="#c9cbcd" />;
  return (
    <svg viewBox="0 0 26 20" className="h-5 w-[26px] shrink-0" aria-hidden>
      {kind === "open" && (<><path d="M1 16V2h8l2 3h10v3H8L3 17z" fill="#94a0ae" /><path d="M8 7h18l-6 10H2z" fill="#dadde0" /></>)}
      {(kind === "chain" || kind === "mix") && (<><path d="M1 4V1h8l2 3z" fill="#94a0ae" /><path d="M1 4h24v15H1z" fill="#d3d6d9" /></>)}
      {kind === "chain" && <g fill="#3593d6"><circle cx="7" cy="8" r="2" /><circle cx="13" cy="8" r="2" /><circle cx="19" cy="8" r="2" /></g>}
      {kind === "mix" && <path d="M8 18v-5M12 18V7M16 18v-8M20 18v-4" stroke="#6b6e72" strokeWidth="3" strokeDasharray="2 1" />}
      {kind === "closed" && (<><path d="M1 5V2h7l2 3z" fill="#94a0ae" /><path d="M1 4h20v13H1z" fill="#d3d6d9" /></>)}
      {kind === "vendor" && <path d="M3 6v8M7 3v14M11 5v10M15 2v16M19 5v10M22 7v6" stroke="#d3d6d9" strokeWidth="2.500" strokeLinecap="round" />}
    </svg>
  );
}

function Browser() {
  return (
    <aside className="mt-[5px] mr-[5px] ml-1 flex w-[501px] shrink-0 flex-col bg-[#27282b] text-[#b9bbbd]">
      <nav className="flex h-[46px] shrink-0 items-stretch bg-[#25282a] text-[15px]">
        <button aria-label="ホーム" className="flex w-9 items-center pl-[9px]"><svg viewBox="0 0 18 18" className="size-[18px] fill-[#a9acaf]" aria-hidden><path d="M9 0l9 9h-3v9h-4v-6H7v6H3V9H0z" /></svg></button>
        <button className="flex-1 text-[14px] whitespace-nowrap">インストゥルメント</button>
        <button className="w-[75px] border-t border-[#6a7078] bg-[#4b5057] text-[14px] text-white">エフェクト</button>
        <button className="w-[55px] text-[14px]">ループ</button>
        <button className="w-[65px] text-[14px]">ファイル</button>
        <button className="w-[62px] text-[14px]">クラウド</button>
        <button className="w-[31px] text-[14px]">プー</button>
        <button aria-label="その他" className="flex w-5 items-center justify-center"><Tri className="text-[#7b7e82]" /></button>
        <button aria-label="検索" className="flex w-8 items-center justify-center"><Search className="size-[22px]" strokeWidth={3} color="#a9acaf" /></button>
      </nav>
      <div className="flex h-[30px] shrink-0 items-center bg-[#4b5057] pr-1 pl-2 text-[15px] text-[#9a9da1]">
        <span className="w-[94px] text-[#c3c5c8]">並び替え:</span>
        <button className="mr-[18px] text-[16px]">全体</button>
        <button className="mr-[18px] text-[14px]">フォルダー</button>
        <button className="mr-[18px] text-[14px] text-white">ベンダー</button>
        <button className="text-[14px]">タイプ</button>
        <span className="flex-1" />
        <Wrench className="mr-3 size-[18px] -scale-x-100 fill-current" strokeWidth={1} />
        <svg viewBox="0 0 20 20" className="size-5" fill="none" stroke="#fff" strokeWidth="3" aria-hidden><rect x="2" y="2" width="16" height="16" rx="2" /><path d="M2 4h16M2 16h16" strokeWidth="4" /></svg>
      </div>
      <div className="flex min-h-0 flex-1 overflow-hidden">
        <ul className="min-w-0 flex-1 pt-[2px] text-[19px]">
          {items.map((it, i) => (
            <li key={it.name} className={`flex h-[33px] items-center gap-[7px] whitespace-nowrap ${i === 3 ? "border-b-2 border-[#4b4e52]" : ""} ${it.kind === "fx" ? "pl-[74px]" : "pl-[40px]"}`}>
              {it.kind === "fx" ? null : it.kind === "open" ? (
                <svg viewBox="0 0 10 10" className="size-[9px] shrink-0 fill-[#d7d9db]" aria-hidden><path d="M10 0v10H0z" /></svg>
              ) : (
                <svg viewBox="0 0 9 12" className="h-3 w-[9px] shrink-0 fill-[#d7d9db]" aria-hidden><path d="M2 0l6 6-6 6z" /></svg>
              )}
              <ItemIcon kind={it.kind} />
              <button className={i < 4 ? "text-[16px]" : ""}>{it.name}</button>
            </li>
          ))}
        </ul>
        <div className="flex w-6 flex-col items-center pt-2 pb-[6px] text-[#5d6064]">
          <Tri dir="up" />
          <span className="mt-2 mb-20 w-[7px] flex-1 bg-[#55575a]" />
          <Tri />
        </div>
      </div>
      <div className="flex h-[150px] shrink-0 gap-6 bg-[#33363b] pt-2 pl-[14px]">
        <svg viewBox="0 0 40 32" className="mt-4 h-8 w-10" aria-hidden><path d="M1 5q0-4 4-4h8l4 5H1z" fill="#94a0ae" /><path d="M1 6h38v25H1z" fill="#dadde0" /></svg>
        <div>
          <div className="text-[20px] leading-7 text-[#dadcde]">エフェクト</div>
          <div className="pt-[2px] text-[14px] leading-6 text-[#b9bbbd]">エフェクト</div>
        </div>
      </div>
    </aside>
  );
}

/* ------------------------------------------------------------------ */
/* Transport                                                            */
/* ------------------------------------------------------------------ */

function Cell({ w, top, bottom, align = "items-center" }: { w: string; top: React.ReactNode; bottom: React.ReactNode; align?: string }) {
  return (
    <div className={`flex flex-col ${w} ${align}`}>
      <div className="flex h-[26px] items-center">{top}</div>
      <div className="flex h-6 items-center">{bottom}</div>
    </div>
  );
}

function TransportButton({ label, w, children }: { label: string; w: string; children: React.ReactNode }) {
  return (
    <button aria-label={label} className={`flex h-16 items-center justify-center ${w}`}>
      <svg width="48" height="36" viewBox="0 0 48 36" fill="#c6c7c8" aria-hidden className="shrink-0">{children}</svg>
    </button>
  );
}

function Transport() {
  return (
    <footer className="flex h-[73px] shrink-0 border-b-[7px] border-[#3a3c40] bg-[#5c6168]">
      <div className="ml-[353px] flex h-[65px] w-[2130px] items-start bg-[#131313] pt-2 pl-7 text-[15px] text-[#9a9c9e] [clip-path:polygon(0_0,100%_0,2112px_100%,13px_100%)]">
        <Cell w="w-[72px]" top={
          <svg viewBox="0 0 44 24" className="h-6 w-11" fill="none" stroke="#6e7377" strokeWidth="2" aria-hidden><circle cx="22" cy="12" r="10" /><g fill="#6e7377" stroke="none"><path d="M2 7l6 5-6 5zM36 7l6 5-6 5z" fill="#3c4a55" /><circle cx="16" cy="11" r="2" /><circle cx="28" cy="11" r="2" /><circle cx="18" cy="7" r="2" /><circle cx="26" cy="7" r="2" /><circle cx="22" cy="17" r="2" /></g></svg>
        } bottom={<span className="text-[16px] text-[#7b7e81]">MIDI</span>} />
        <Cell w="w-[97px]" top={<div className="flex w-[97px] flex-col gap-[3px]"><span className="h-[7px] w-[97px] bg-[linear-gradient(to_right,#36393e_93%,#242628_93%)]" /><span className="h-[7px] w-[97px] bg-[linear-gradient(to_right,#36393e_93%,#242628_93%)]" /></div>} bottom={<span className="text-[13px]">パフォーマンス</span>} />
        <div className="flex h-[50px] w-[84px] items-center justify-center">
          <svg viewBox="0 0 40 40" className="size-10 fill-[#b5b7b9]" aria-hidden>
            {Array.from({ length: 14 }, (_, i) => <circle key={i} cx={20 + 16 * Math.cos((i * Math.PI) / 7)} cy={20 + 16 * Math.sin((i * Math.PI) / 7)} r="2" />)}
          </svg>
        </div>
        <Cell w="w-[98px]" align="items-start" top={<span className="text-[19px] text-[#dcdddf]">44.1 kHz</span>} bottom={<span className="text-[16px] text-[#dcdddf]">0.0 ms</span>} />
        <Cell w="w-[128px]" align="items-start" top={<span className="text-[19px] text-[#dcdddf]">9:15 <span className="text-[17px]">日</span></span>} bottom={<span>最大録音時間</span>} />
        <Cell w="w-[130px]" top={<span className="text-[19px] text-[#b9bbbd]">00:01:22.292</span>} bottom={<span className="pr-3">秒</span>} />
        <Cell w="w-[266px]" top={<span className="text-[28px] leading-none font-bold text-[#cfd0d1]">00052.02.03.92</span>} bottom={<span className="pr-4">小節</span>} />
        <div className="-mt-2 flex">
          <TransportButton label="前へ" w="w-6"><path d="M32 8v20L15 18z" /></TransportButton>
          <TransportButton label="巻き戻し" w="w-[50px]"><path d="M24 8v20L10 18zM38 8v20L24 18z" /></TransportButton>
          <TransportButton label="早送り" w="w-11"><path d="M10 8v20l14-10zM24 8v20l14-10z" /></TransportButton>
          <TransportButton label="次へ" w="w-[26px]"><path d="M16 8v20l17-10z" /></TransportButton>
          <TransportButton label="先頭へ" w="w-[50px]"><path d="M14 8h2v20h-2zM33 8v20L17 18z" /></TransportButton>
          <TransportButton label="停止" w="w-[60px]"><path d="M9 3h30v30H9z" fill="#2eb0da" /></TransportButton>
          <TransportButton label="再生" w="w-[52px]"><path d="M11 3v30l26-15z" /></TransportButton>
          <TransportButton label="録音" w="w-12"><circle cx="24" cy="18" r="15" /></TransportButton>
          <TransportButton label="ループ" w="w-20"><path d="M18 30h-6q-10-4-10-12Q3 5 14 5h20q11 0 11 13 0 12-13 13h-4l3-11M22 20l-4 11" fill="none" stroke="#8f9193" strokeWidth="4" /></TransportButton>
        </div>
        <Cell w="w-[190px] pl-[11px]" align="items-start"
          top={<><span className="w-[22px] text-[17px] text-[#4e7d9c]">L</span><span className="text-[19px] text-[#dcdddf]">00001.01.01.00</span></>}
          bottom={<><span className="w-[22px] text-[17px] text-[#4e7d9c]">R</span><span className="text-[19px] text-[#dcdddf]">00001.01.01.00</span></>} />
        <Cell w="w-[85px]"
          top={<div className="flex gap-4"><svg viewBox="0 0 26 16" className="h-4 w-[26px]" fill="none" stroke="#a5a7a9" strokeWidth="2" aria-hidden><path d="M1 4h10l6 7h9" /><path d="M1 11h10" strokeDasharray="2 2" /></svg><svg viewBox="0 0 24 16" className="h-4 w-6" fill="#a5a7a9" aria-hidden><path d="M1 0h1v16H1zM5 0h2v16H5zM8 7h4V4h12v8H12V9H8z" /></svg></div>}
          bottom={<div className="flex gap-4"><Settings className="size-[18px]" strokeWidth={3} color="#a5a7a9" /><svg viewBox="0 0 26 16" className="h-4 w-[26px]" fill="#a5a7a9" aria-hidden><path d="M5 0h2v16H5zM19 0h2v16h-2zM7 4h12v8H7zM0 7h4v2H0zM22 7h4v2h-4z" /></svg></div>} />
        <Cell w="w-[104px]"
          top={<div className="flex items-center gap-4 text-[#8e9193]"><Dot /><Wrench className="size-[18px] -scale-x-100 fill-current" strokeWidth={1} /><svg viewBox="0 0 18 18" className="size-[18px]" aria-hidden><path d="M6 1h5l6 16H1zM8 12l7-10" fill="currentColor" stroke="#222" /></svg></div>}
          bottom={<span className="text-[13px]">メトロノーム</span>} />
        <Cell w="w-[78px]" top={<span className="text-[19px] text-[#dcdddf]">4 / 4</span>} bottom={<span>拍子</span>} />
        <Cell w="w-[58px]" top={<span className="text-[19px] text-[#dcdddf]">-</span>} bottom={<span>調</span>} />
        <Cell w="w-[82px]" top={<span className="text-[19px] text-[#dcdddf]">150.00</span>} bottom={<span className="text-[14px]">テンポ</span>} />
        <Cell w="w-[150px] pl-[13px]" align="items-start"
          top={<div className="flex flex-col gap-px"><span className="h-[6px] w-[101px] bg-[#36393e]" /><span className="h-[6px] w-[101px] bg-[#36393e]" /></div>}
          bottom={<div className="flex items-center gap-3 text-[#4cb8dc]"><span className="h-[14px] w-[101px] bg-[repeating-linear-gradient(to_right,transparent_0,transparent_2px,#131313_2px,#131313_3px),linear-gradient(to_right,#4b9cc0_60%,#333639_60%)]" /><Stereo /></div>} />
      </div>
      <div className="flex-1" />
      <nav className="flex text-[16px] text-[#e6e8ea]">
        <button className="w-[84px] bg-[#3593d6]">編集</button>
        <button className="w-[84px] border-x border-[#4a4e55] text-[15px]">ミックス</button>
        <button className="w-[98px] bg-[#3593d6]">ブラウズ</button>
      </nav>
    </footer>
  );
}

export default function App() {
  return (
    <div className="flex h-screen w-full flex-col overflow-hidden bg-[#191b1e] font-['Liberation_Sans','Noto_Sans_CJK_JP',sans-serif] [font-feature-settings:'palt']">
      <TopBar />
      <main className="flex min-h-0 flex-1 border-b-[3px] border-black pb-[3px]">
        <Inspector />
        <div className="ml-[2px] flex min-w-0 flex-1 flex-col">
          <Arrangement />
          <PitchEditor />
        </div>
        <Browser />
      </main>
      <Transport />
    </div>
  );
}
